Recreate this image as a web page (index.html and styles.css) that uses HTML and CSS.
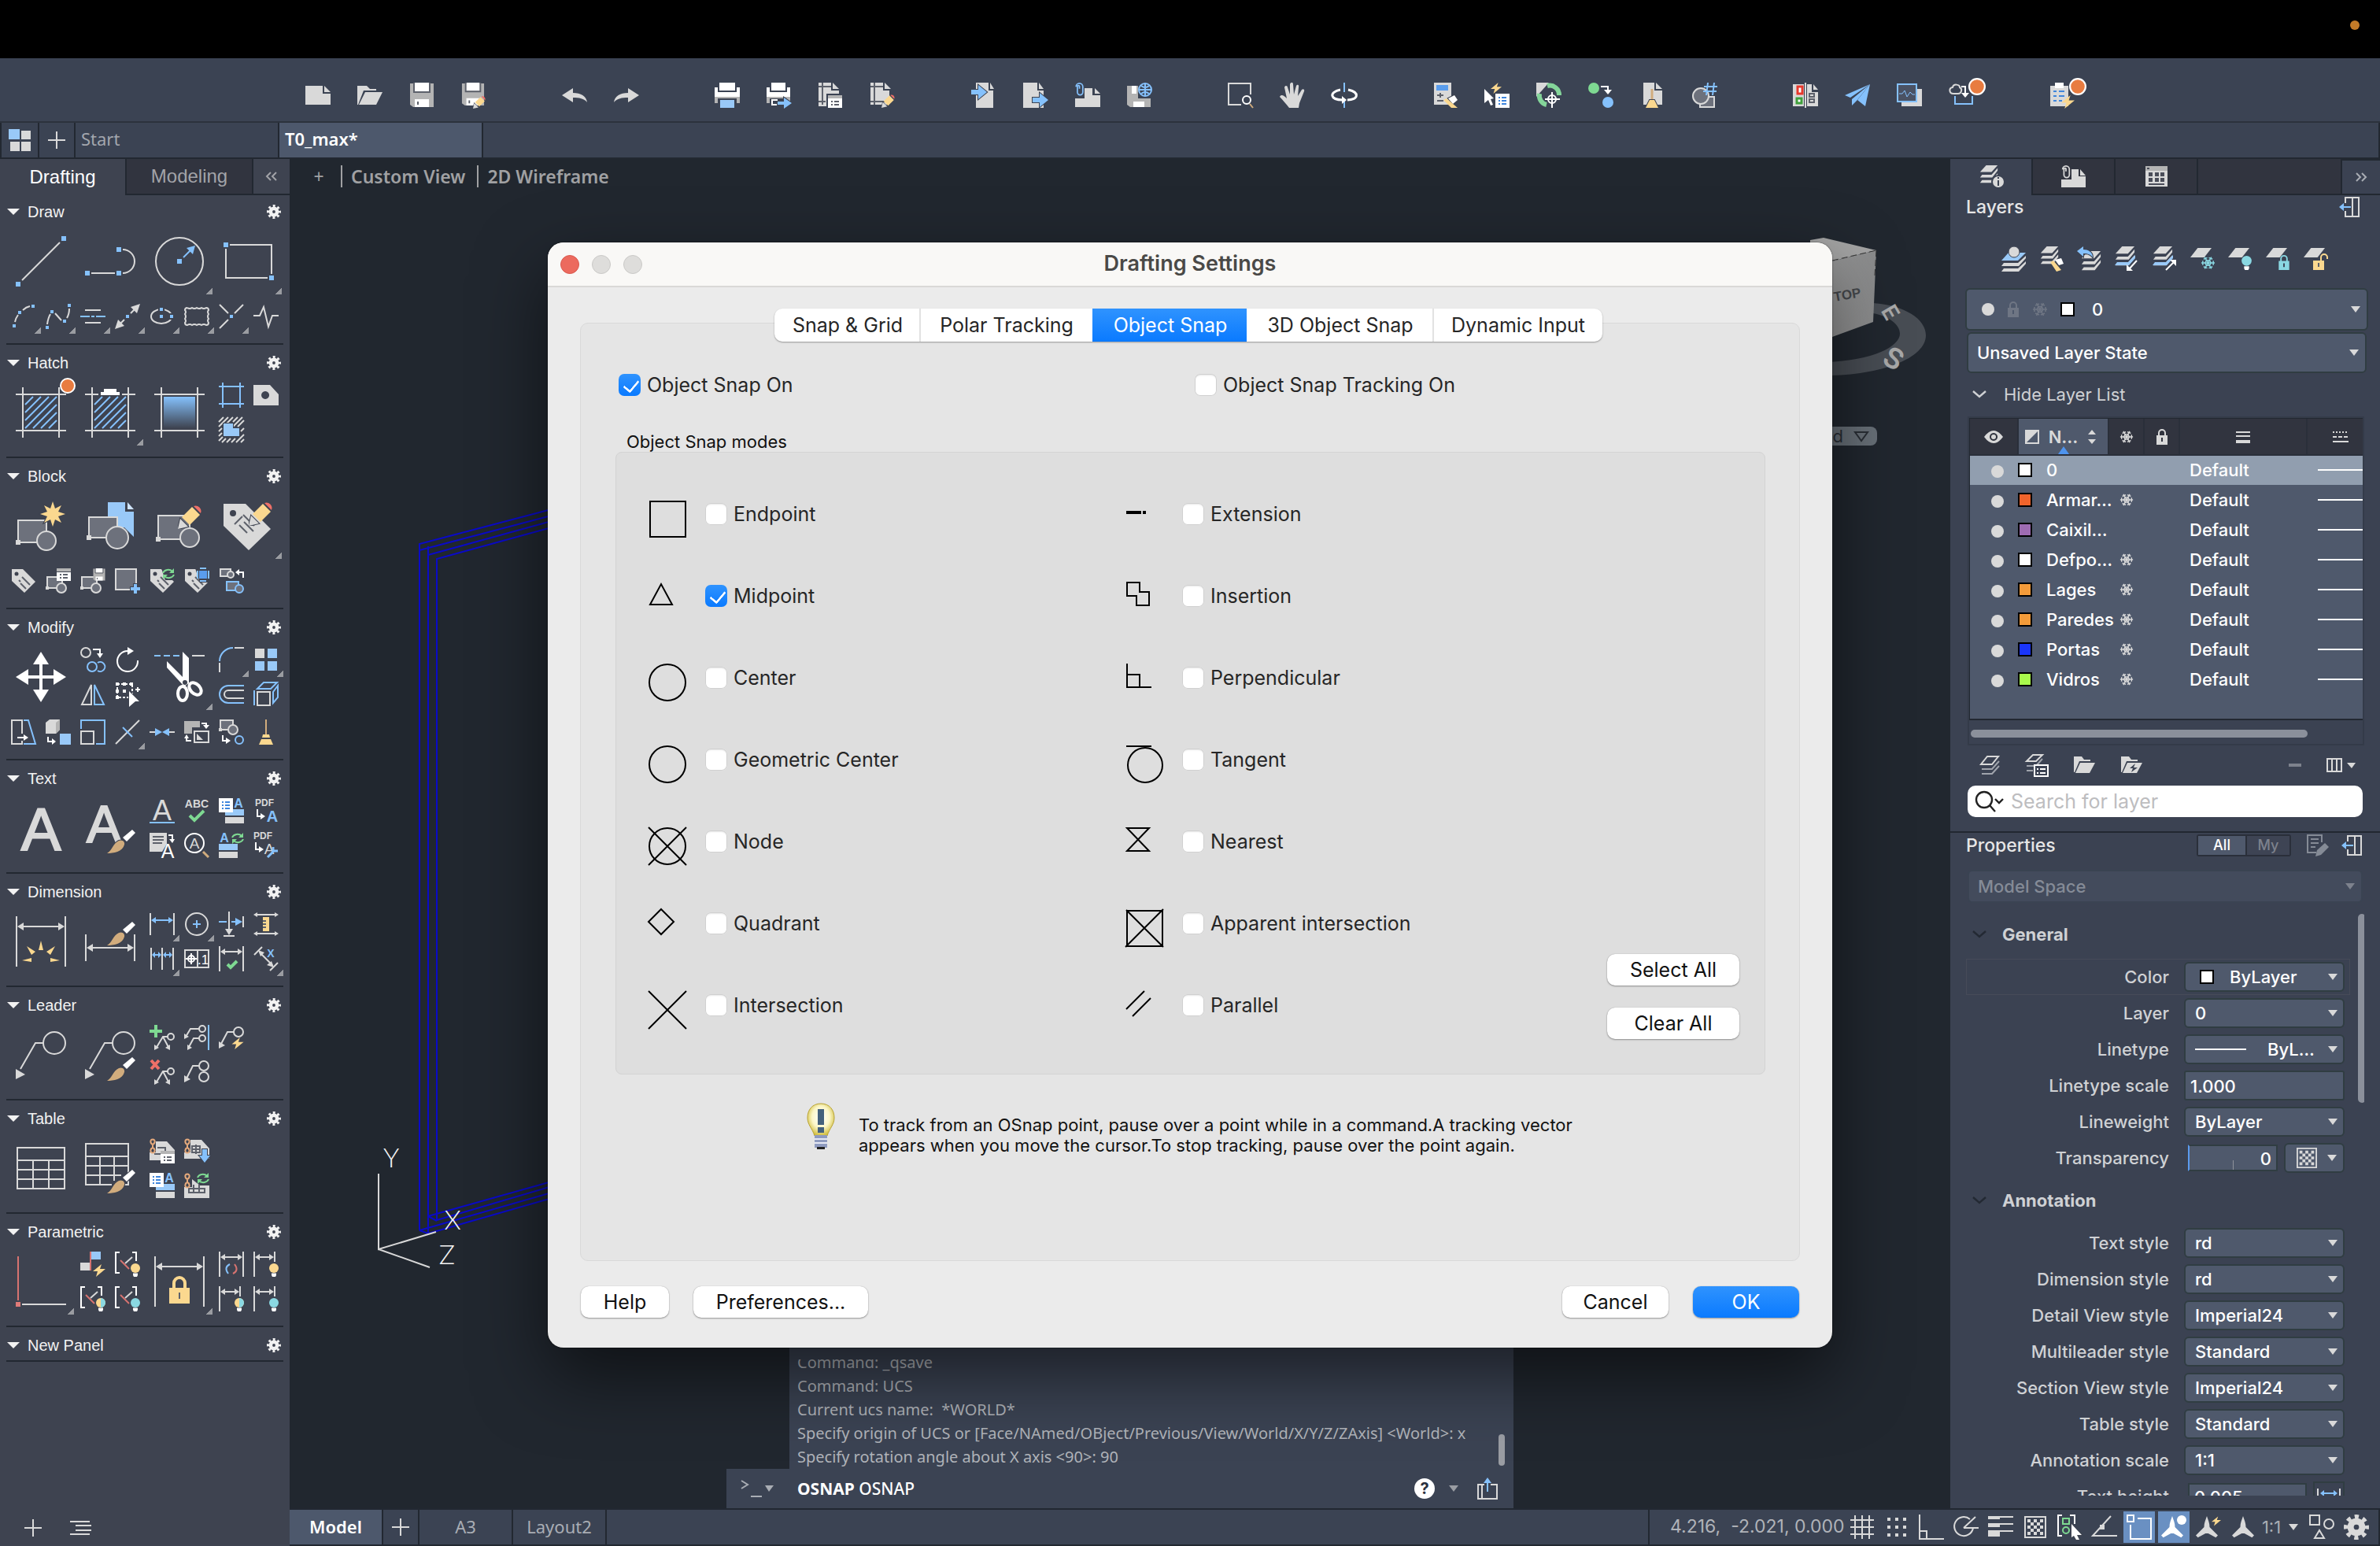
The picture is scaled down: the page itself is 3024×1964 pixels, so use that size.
FILE: index.html
```html
<!DOCTYPE html>
<html lang="en">
<head>
<meta charset="utf-8">
<meta name="viewport" content="width=device-width, initial-scale=1">
<title>T0_max* – Drafting Settings</title>
<link rel="stylesheet" href="styles.css">
</head>
<body>

<!-- Shared icon parts -->
<svg class="sprite" aria-hidden="true">
  <defs>
    <linearGradient id="fade" x1="0" y1="0" x2="0" y2="1"><stop offset="0" stop-color="#85c1fc"/><stop offset="1" stop-color="#3e4350"/></linearGradient>
    <linearGradient id="face" x1="0" y1="0" x2="1" y2="0"><stop offset="0" stop-color="#9c9c9c"/><stop offset="1" stop-color="#8a8b8c"/></linearGradient>
    <radialGradient id="glow" cx="50%" cy="42%" r="60%"><stop offset="0" stop-color="#ffffff"/><stop offset="0.55" stop-color="#fbf6c8"/><stop offset="1" stop-color="#cdb832"/></radialGradient>
  </defs>
  <symbol id="gear" viewBox="0 0 20 20"><circle cx="10" cy="10" r="8" fill="none" stroke="currentColor" stroke-width="4" stroke-dasharray="3.14" stroke-dashoffset="1.57"/><circle cx="10" cy="10" r="4.6" fill="none" stroke="currentColor" stroke-width="5"/></symbol>
  <symbol id="tri" viewBox="0 0 16 8" preserveAspectRatio="none"><path d="M0 0H16L8 8Z" fill="currentColor"/></symbol>
  <symbol id="chev" viewBox="0 0 18 10"><path d="M1 1L9 8L17 1" fill="none" stroke="currentColor" stroke-width="2.4"/></symbol>
  <symbol id="snow" viewBox="0 0 20 20"><g fill="none" stroke="currentColor" stroke-width="1.6"><path d="M1 10H19M5.500 2.200L14.500 17.800M14.500 2.200L5.500 17.800"/><path d="M14 10L12 6.500H8L6 10L8 13.500H12ZM3 7V13M17 7V13M4 5L9 3M16 5L11 3M4 15L9 17M16 15L11 17"/></g></symbol>
  <symbol id="lock" viewBox="0 0 16 22"><path d="M4 10V6a4 4 0 0 1 8 0V10" fill="none" stroke="currentColor" stroke-width="2"/><path fill="currentColor" fill-rule="evenodd" d="M1 9H15V21H1ZM7 12V17H9V12Z"/></symbol>
  <symbol id="pencil" viewBox="0 0 32 32"><path class="f k" d="M0 32L3 19L13 29Z"/><path class="fy" d="M5 17L18 4L28 14L15 27Z"/><path class="fr" d="M20 3a7 7 0 0 1 9 9Z"/></symbol>
  <symbol id="brush" viewBox="0 0 36 30"><path class="ft" d="M0 30C6 27 8 17 15 14C20 12 23 16 22 19C20 28 8 30 0 30Z"/><path class="fw" d="M20 10L32 0L36 4L25 15Z"/></symbol>
  <symbol id="bolt" viewBox="0 0 16 16"><path class="fy" d="M11 0L0 9H6L4 16L16 6H9Z"/></symbol>
  <symbol id="bulb" viewBox="0 0 12 17"><circle cx="6" cy="6" r="6" fill="currentColor"/><path class="fw" d="M3 12.500H9V15L8 17H4L3 15Z"/></symbol>
  <symbol id="sync" viewBox="0 0 16 14"><g fill="none" stroke="currentColor" stroke-width="2"><path d="M1 6A7 6 0 0 1 13 4"/><path d="M15 8A7 6 0 0 1 3 10"/></g><path fill="currentColor" d="M15 0V6H9ZM1 14V8H7Z"/></symbol>
  <symbol id="tag" viewBox="0 0 32 32"><path class="f" d="M1 1H15L31 17L17 31L1 16Z"/><circle class="fd" cx="7" cy="7" r="2.500"/><path class="ld" d="M10 15L12 17M14 11L24 21M12 19L19 26"/></symbol>
  <symbol id="block" viewBox="0 0 32 32"><path class="l fs" d="M2 11H21V25H2Z"/><circle class="l fs" cx="20" cy="25" r="6"/><path class="f" d="M0 23H4V27H0Z"/></symbol>
  <symbol id="form" viewBox="0 0 18 16"><path class="fw" d="M0 0H18V16H0Z"/><path class="fm" d="M0 0H18V4H0Z"/><path class="ld" d="M4 8H6M8 8H14M4 12H6M8 12H14"/></symbol>
  <symbol id="list" viewBox="0 0 18 18"><path class="fw" d="M0 0H18V18H0Z"/><path d="M4 5H6M8 5H14M4 9H6M8 9H14M4 13H6M8 13H14" fill="none" stroke="#3f86dd" stroke-width="2"/></symbol>
  <symbol id="disk" viewBox="0 0 32 32"><path class="fm" d="M1 1H31V31H5L1 28Z"/><path class="fw" d="M7 0H25V11H7ZM7 21H25V31H7Z"/><path class="ld" d="M11 24V28M6 0V12H26V0"/></symbol>
  <symbol id="link" viewBox="0 0 8 20"><path d="M4 1.500C0 1.500 1 7 4 8V12M4 18.500C8 18.500 7 13 4 12V8M4 1.500C8 1.500 7 7 4 8M4 18.500C0 18.500 1 13 4 12" fill="none" stroke="#e6aa7c" stroke-width="2"/></symbol>
  <symbol id="sheet" viewBox="0 0 26 10" preserveAspectRatio="none"><path d="M9 0H26L17 10H0Z" fill="currentColor"/></symbol>
  <symbol id="stack" viewBox="0 0 26 28"><path class="f" d="M9 0H26L17 10H0Z"/><path class="f" d="M3 14H17L26 4V8L18 18H0ZM3 22H17L26 12V16L18 26H0Z"/></symbol>
  <symbol id="dock" viewBox="0 0 26 26"><path class="l" d="M8 8V1H25V25H8V18M17 1V25"/><path class="lb" d="M5 13H15"/><path class="fb" d="M0 13L6 8V18Z"/></symbol>
  <symbol id="page" viewBox="0 0 32 32"><path class="f" d="M6 0H22V10H28V32H6Z"/><path class="f" d="M24 0L29 8H24Z"/></symbol>
  <symbol id="clip" viewBox="0 0 12 22"><path d="M6 9V5a2 2 0 0 0-3 0V14a4 4 0 0 0 8 0V6a5 5 0 0 0-10 0" fill="none" stroke="currentColor" stroke-width="2"/></symbol>
  <symbol id="ann" viewBox="0 0 32 32"><path fill="currentColor" d="M16 0C18 6 20 10 20 16L32 28L29 31L18 25H14L3 31L0 28L12 16C12 10 14 6 16 0Z"/></symbol>
  <symbol id="badge" viewBox="0 0 20 20"><circle cx="10" cy="10" r="9" fill="#e87c40" stroke="#fff" stroke-width="2"/></symbol>
  <symbol id="checker" viewBox="0 0 28 28"><path d="M1 1H27V27H1Z" fill="none" stroke="currentColor" stroke-width="2"/><path fill="currentColor" d="M4 4h4v4h-4zM12 4h4v4h-4zM20 4h4v4h-4zM8 8h4v4h-4zM16 8h4v4h-4zM4 12h4v4h-4zM12 12h4v4h-4zM20 12h4v4h-4zM8 16h4v4h-4zM16 16h4v4h-4zM4 20h4v4h-4zM12 20h4v4h-4zM20 20h4v4h-4z"/></symbol>
</svg>

<div class="menubar"><span class="mic-dot"></span></div>

<header class="toolbar">
  <div class="group">
    <button aria-label="New"><svg viewBox="0 0 32 32"><path class="f" d="M0 4H22V14H32V28H0Z"/><path class="f" d="M24 4L32 12H24Z"/></svg></button>
    <button aria-label="Open"><svg viewBox="0 0 32 32"><path class="f" d="M0 4H12L16 8H24V10H8L1 28H0Z"/><path class="f" d="M10 12H32L24 28H2Z"/></svg></button>
    <button aria-label="Save"><svg viewBox="0 0 32 32"><use href="#disk"/></svg></button>
    <button aria-label="Save As"><svg viewBox="0 0 32 32"><use href="#disk" width="30" height="30"/><use href="#pencil" x="15" y="16" width="17" height="17"/></svg></button>
  </div>
  <div class="group">
    <button aria-label="Undo"><svg viewBox="0 0 32 32"><path class="f" d="M0 16L14 7V13C24 13 31 17 32 25C28 20 22 19 14 19V25Z"/></svg></button>
    <button aria-label="Redo"><svg viewBox="0 0 32 32"><path class="f" d="M32 16L18 7V13C8 13 1 17 0 25C4 20 10 19 18 19V25Z"/></svg></button>
  </div>
  <div class="group">
    <button aria-label="Print"><svg viewBox="0 0 32 32"><path class="fw" d="M6 0H26V10H6ZM0 6H4V12H28V6H32V18H0Z"/><path class="fm" d="M0 18H32V26H28V20H4V26H0Z"/><path class="fbl" d="M7 22H25V32H7Z"/></svg></button>
    <button aria-label="Publish"><svg viewBox="0 0 32 32"><path class="fw" d="M6 0H24V10H6ZM0 6H4V12H26V6H30V18H0Z"/><path class="fm" d="M0 18H30V24H26V20H4V26H0Z"/><path class="lw" d="M14 22H7V28H14"/><path class="fb k" d="M14 24H22V19L32 26L22 33V28H14Z"/></svg></button>
    <button aria-label="Page Setup"><svg viewBox="0 0 32 32"><path class="f" d="M0 0H16V10H26V14H10V30H0Z"/><path class="f" d="M18 0L26 8H18Z"/><path class="ld" d="M0 5H16M5 0V28M0 24H9"/><use href="#form" x="12" y="16" width="18" height="16"/></svg></button>
    <button aria-label="Edit Page"><svg viewBox="0 0 32 32"><path class="f" d="M0 0H16V10H24V28H0Z"/><path class="f" d="M18 0L26 8H18Z"/><path class="ld" d="M0 5H16M5 0V28M0 24H20"/><use href="#pencil" x="14" y="14" width="18" height="18"/></svg></button>
  </div>
  <div class="group">
    <button aria-label="Import"><svg viewBox="0 0 32 32"><use href="#page"/><path class="fb k" d="M0 9H9V3L20 12L9 21V15H0Z"/></svg></button>
    <button aria-label="Export"><svg viewBox="0 0 32 32"><path class="f" d="M0 0H18V10H26V32H0Z"/><path class="f" d="M20 0L26 8H20Z"/><path class="fb k" d="M12 19H21V13L32 22L21 31V25H12Z"/></svg></button>
    <button aria-label="Attach"><svg viewBox="0 0 32 32"><path class="f" d="M0 20H12V7H22V16H32V31H0Z"/><path class="f" d="M25 7L32 14H25Z"/><use href="#clip" class="c-blue" width="11" height="19"/></svg></button>
    <button aria-label="Save to Web"><svg viewBox="0 0 32 32"><path class="fm" d="M0 4H14V20H30V31H4L0 28Z"/><path class="fw" d="M6 4H12V14H6ZM8 24H22V31H8Z"/><circle class="lb" cx="23" cy="9" r="8"/><path class="lb" d="M15 9H31M23 1V17M18 4Q23 8 28 4M18 14Q23 10 28 14"/></svg></button>
  </div>
  <div class="group">
    <button aria-label="Zoom Window"><svg viewBox="0 0 32 32"><path class="l" d="M17 28H1V1H29V15"/><circle class="lw" cx="24" cy="22" r="5"/><path class="ltan" d="M28 27L32 32"/></svg></button>
    <button aria-label="Pan"><svg viewBox="0 0 32 32"><path class="f" d="M12 32C8 27 4 22 0 18C2 14 6 17 9 20L6 6C7 3 10 4 10 6L13 15L13 2C14-1 17-1 17 2L18 15L21 4C22 2 25 2 24 6L23 17L28 9C30 7 32 9 31 11L25 26L24 32Z"/></svg></button>
    <button aria-label="Orbit"><svg viewBox="0 0 32 32"><path class="lb" d="M16 0V12M16 24V32"/><path class="lw thick" d="M11 9C-4 12-2 22 14 22M21 9C36 12 34 22 20 22"/><path class="fw" d="M13 17L19 22L13 27Z"/></svg></button>
  </div>
  <div class="group">
    <button aria-label="Quick Calc"><svg viewBox="0 0 32 32"><path class="f" d="M2 0H24V28H2Z"/><path d="M5 3H20V10H5Z" fill="#5a9ded"/><path class="ld" d="M6 16H14M10 13V19M6 23H14"/><path class="fw k" d="M20 20L28 16L32 22L26 27Z"/><path class="fy" d="M14 22L18 20L32 32H24Z"/></svg></button>
    <button aria-label="Quick Select"><svg viewBox="0 0 32 32"><path class="fw" d="M0 8L12 20L8 21L11 28L8 29L5 22L0 26Z"/><use href="#bolt" x="8" y="0" width="14" height="14"/><use href="#list" x="14" y="14" width="18" height="18"/></svg></button>
    <button aria-label="Geographic Location"><svg viewBox="0 0 32 32"><path class="f" d="M0 0H16L0 18Z"/><path d="M14 4a12 12 0 0 1 15 12M4 14a12 12 0 0 0 9 14" fill="none" stroke="#84d59a" stroke-width="6"/><circle class="lw" cx="20" cy="21" r="5"/><path class="lw" d="M20 12V32M11 21H30"/></svg></button>
    <button aria-label="Convert"><svg viewBox="0 0 32 32"><circle class="fg" cx="7" cy="7" r="7"/><path class="lw" d="M16 5H25V10"/><path class="fw" d="M20 9H30L25 15Z"/><circle class="fb" cx="25" cy="25" r="7"/></svg></button>
    <button aria-label="Purge"><svg viewBox="0 0 32 32"><path class="f" d="M4 0H18V10H28V28H4Z"/><path class="f" d="M20 0L28 8H20Z"/><path class="ltan thick k-line" d="M15 8V22"/><path class="fy k" d="M7 32L12 22H18L23 32Z"/></svg></button>
    <button aria-label="Count"><svg viewBox="0 0 32 32"><path class="l fs" d="M10 18H28V31H10Z"/><circle class="l fs" cx="11" cy="17" r="10"/><path class="lb" d="M20 0L18 16M28 0L26 16M15 5H32M14 11H31"/></svg></button>
  </div>
  <div class="group">
    <button aria-label="Compare"><svg viewBox="0 0 32 32"><path class="f" d="M0 2H14V30H0ZM18 2H24V12H32V30H18Z"/><path class="f" d="M26 2L32 9H26Z"/><path d="M6 5H12V14H6Z" fill="#fff" stroke="#e8382c" stroke-width="3"/><path d="M5 20H11V26H5Z" fill="#fff" stroke="#3fa03c" stroke-width="3"/><path class="ld" d="M21 14H27V18H21ZM21 21H27V25H21Z"/><path class="l" d="M16 0V32"/></svg></button>
    <button aria-label="Share"><svg viewBox="0 0 32 32"><path class="fb" d="M32 2L0 16L7 19Z"/><path class="fb" d="M32 2L9 21V29L15 23Z"/><path class="fb" d="M32 2L16 22L26 30Z"/></svg></button>
    <button aria-label="Activity"><svg viewBox="0 0 32 32"><path class="f" d="M6 8H32V30H6Z"/><path d="M1 2H25V24H1Z" fill="#4a5264" stroke="#85c1fc" stroke-width="2"/><path class="lb thin" d="M3 14H7L10 10L13 18L17 12L20 15H23"/></svg></button>
    <button aria-label="Cloud"><svg viewBox="0 0 32 32"><path class="lb" d="M8 17V27H30V17"/><path class="l" d="M6 14C0 14 0 6 5 6C6 1 14 2 14 6C18 8 16 14 12 14Z"/><path class="lw" d="M16 5H21V14"/><path class="fw" d="M16 13H26L21 19Z"/><use href="#badge" x="25" y="-6" width="22" height="22"/></svg></button>
  </div>
  <div class="group">
    <button aria-label="Checklist"><svg viewBox="0 0 32 32"><path class="f" d="M1 4H24V30H1Z"/><path class="fw" d="M7 0H18V7H7Z"/><path d="M5 11H9M12 11H19M5 17H9M12 17H19M5 23H9M12 23H16" fill="none" stroke="#3f86dd" stroke-width="2"/><use href="#bolt" x="15" y="16" width="17" height="17"/><use href="#badge" x="25" y="-6" width="22" height="22"/></svg></button>
  </div>
</header>

<nav class="doctabs" aria-label="Documents">
  <button class="doc-icon" aria-label="Start tab layout"><svg width="28" height="28" viewBox="0 0 28 28"><path class="fbl" d="M0 0H14V13H0Z"/><path class="f" d="M16 2H28V13H16ZM2 16H14V28H2ZM16 16H28V28H16Z"/></svg></button>
  <button class="doc-add" aria-label="New drawing"><svg width="22" height="22" viewBox="0 0 22 22"><path class="l" d="M11 0V22M0 11H22"/></svg></button>
  <a class="doc" href="#start">Start</a>
  <a class="doc active" href="#t0">T0_max*</a>
  <span class="doc-rest"></span>
</nav>

<div class="workspace">

<aside class="toolset">
  <div class="toolset-tabs">
    <button class="active">Drafting</button><button>Modeling</button><button class="fold" aria-label="Collapse"><svg width="14" height="12" viewBox="0 0 14 12"><path d="M6 1L1 6L6 11M13 1L8 6L13 11" fill="none" stroke="#a2a3a8" stroke-width="2"/></svg></button>
  </div>

  <section>
    <h2><svg class="tri"><use href="#tri"/></svg>Draw<svg class="gear"><use href="#gear"/></svg></h2>
    <div class="tools">
      <button class="big" aria-label="Line"><svg viewBox="0 0 64 64"><path class="l" d="M8 56L56 8"/><path class="fb" d="M0 58H6V64H0ZM58 0H64V6H58Z"/></svg></button>
      <button class="big" aria-label="Polyline"><svg viewBox="0 0 64 64"><path class="l" d="M8 47H38M48 17a15 15 0 0 1 0 30"/><path class="fb" d="M0 44H6V50H0ZM40 44H46V50H40ZM40 14H46V20H40Z"/></svg></button>
      <button class="big fly" aria-label="Circle"><svg viewBox="0 0 64 64"><circle class="l" cx="32" cy="32" r="30"/><path class="lb" d="M37 27L47 17"/><path class="fb" d="M52 12L41 15L49 23ZM29 29H35V35H29Z"/></svg></button>
      <button class="big fly" aria-label="Rectangle"><svg viewBox="0 0 64 64"><path class="l" d="M8 11H61V48M56 53H3V16"/><path class="fb" d="M0 8H6V14H0ZM58 50H64V56H58Z"/></svg></button>
    </div>
    <div class="tools single">
      <button class="fly" aria-label="Arc"><svg viewBox="0 0 32 32"><path class="l" d="M5 23Q6 18 9 14M15 8Q19 4 24 3"/><path class="fb" d="M2 26H6V30H2ZM9 9H13V13H9ZM26 1H30V5H26Z"/></svg></button>
      <button class="fly" aria-label="Spline"><svg viewBox="0 0 32 32"><path class="l" d="M2 26Q3 18 6 13M12 12L20 21M27 18Q30 13 30 6"/><path class="fb" d="M0 28H4V32H0ZM6 8H10V12H6ZM22 20H26V24H22ZM28 0H32V4H28Z"/></svg></button>
      <button class="fly" aria-label="Multiline"><svg viewBox="0 0 32 32"><path class="l" d="M6 8H26M6 24H26"/><path class="lb" d="M0 16H12M14 16H18M20 16H32"/></svg></button>
      <button class="fly" aria-label="Ray"><svg viewBox="0 0 32 32"><path class="l" d="M5 27L12 20M20 12L27 5"/><path class="f" d="M32 0L20 4L28 12ZM0 32L4 20L12 28Z"/><path class="fb" d="M14 14H18V18H14Z"/></svg></button>
      <button class="fly" aria-label="Ellipse"><svg viewBox="0 0 32 32"><ellipse class="l" cx="15" cy="16" rx="13" ry="9"/><path class="fd" d="M11 3H19V11H11ZM24 12H32V20H24Z"/><path class="fb" d="M13 5H17V9H13ZM26 14H30V18H26ZM13 14H17V18H13Z"/></svg></button>
      <button class="fly" aria-label="Revision Cloud"><svg viewBox="0 0 32 32"><path class="l" d="M4 5q3 2 6 0q3 2 6 0q3 2 6 0q3 2 6 0q3 0 3 3q-2 2 0 5q-2 3 0 6q-2 2 0 5q0 3-3 3q-3-2-6 0q-3-2-6 0q-3-2-6 0q-3-2-6 0q-3 0-3-3q2-2 0-5q2-3 0-6q2-3 0-5q0-3 3-3"/></svg></button>
      <button class="fly" aria-label="Trim"><svg viewBox="0 0 32 32"><path class="l" d="M1 1L12 12M20 12L31 1M12 20L1 31"/><path class="fb" d="M14 14H18V18H14Z"/></svg></button>
      <button aria-label="Break line"><svg viewBox="0 0 32 32"><path class="l" d="M0 15H8L13 4L19 29L24 15H32"/></svg></button>
    </div>
  </section>

  <section>
    <h2><svg class="tri"><use href="#tri"/></svg>Hatch<svg class="gear"><use href="#gear"/></svg></h2>
    <div class="tools">
      <button class="big" aria-label="Hatch"><svg viewBox="0 0 64 64"><path class="l" d="M0 9H64M0 55H64M9 0V64M55 0V64"/><path class="lb" d="M12 22L22 12M12 32L32 12M12 42L42 12M12 52L52 12M22 52L52 22M32 52L52 32M42 52L52 42"/><use href="#badge" x="56" y="-12" width="20" height="20"/></svg></button>
      <button class="big fly" aria-label="Hatch Edit"><svg viewBox="0 0 64 64"><path class="l" d="M0 9H17M47 9H64M0 55H64M9 0V64M55 0V64"/><path class="lb" d="M12 22L22 12M12 32L32 12M12 42L42 12M12 52L52 12M22 52L52 22M32 52L52 32M42 52L52 42"/><path class="fw" d="M24 2H40V6H44V10H20V6H24Z"/></svg></button>
      <button class="big" aria-label="Gradient"><svg viewBox="0 0 64 64"><path class="l" d="M0 9H64M0 55H64M9 0V64M55 0V64"/><path d="M12 12H52V52H12Z" fill="url(#fade)"/></svg></button>
      <button aria-label="Boundary"><svg viewBox="0 0 32 32"><path class="lb" d="M0 5H32M0 27H32M5 0V32M27 0V32"/></svg></button>
      <button aria-label="Region"><svg viewBox="0 0 32 32"><path class="l" d="M0 6L6 0M0 12L12 0M6 12L18 0M18 6L24 0M18 12L30 0M24 12L32 4M0 18L4 14M0 24L4 20M0 30L5 25M4 32L9 27M10 32L15 27M16 32L21 27M22 32L32 22M28 32L32 28M28 18L32 14"/><path class="fbl k" d="M6 8H18V14H26V24H6Z"/></svg></button>
      <button aria-label="Wipeout"><svg viewBox="0 0 32 32"><path class="f" fill-rule="evenodd" d="M0 3H21L32 15V29H0ZM15 11a5 5 0 1 0 0.100 0Z"/></svg></button>
    </div>
  </section>

  <section>
    <h2><svg class="tri"><use href="#tri"/></svg>Block<svg class="gear"><use href="#gear"/></svg></h2>
    <div class="tools">
      <button class="big" aria-label="Create Block"><svg viewBox="0 0 64 64"><path class="l fs" d="M3 25H39V53H3Z"/><circle class="l fs" cx="39" cy="51" r="12"/><path class="f" d="M0 50H6V56H0Z"/><path class="fy k" d="M63 17L54 14L58 6L50 10L47 1L44 10L36 6L40 14L31 17L40 20L36 28L44 24L47 33L50 24L58 28L54 20Z"/></svg></button>
      <button class="big" aria-label="Insert Block"><svg viewBox="0 0 64 64"><path class="fbl" d="M29 2H51V14H62V46L50 34H29Z"/><path d="M54 2L62 11H54Z" fill="#cfe4fb"/><path class="l fs" d="M5 21H41V47H5Z"/><circle class="l fs" cx="41" cy="47" r="14"/><path class="f" d="M2 44H8V50H2Z"/></svg></button>
      <button class="big" aria-label="Edit Block"><svg viewBox="0 0 64 64"><path class="l fs" d="M5 19H45V49H5Z"/><circle class="l fs" cx="45" cy="47" r="12"/><path class="f" d="M2 46H8V52H2Z"/><use href="#pencil" x="30" y="4" width="32" height="32"/></svg></button>
      <button class="big fly" aria-label="Edit Attributes"><svg viewBox="0 0 64 64"><path class="f" d="M0 4H28L60 36L32 63L0 32Z"/><circle class="fd" cx="12" cy="16" r="4"/><path class="ld" d="M25 18L39 32M14 30L24 20M20 31L30 41M26 27L38 39"/><use href="#pencil" x="32" y="0" width="32" height="32"/></svg></button>
    </div>
    <div class="tools single">
      <button aria-label="Attribute"><svg viewBox="0 0 32 32"><use href="#tag"/></svg></button>
      <button aria-label="Block Manager"><svg viewBox="0 0 32 32"><use href="#block"/><use class="k" href="#form" x="14" y="0" width="18" height="16"/></svg></button>
      <button aria-label="Write Block"><svg viewBox="0 0 32 32"><use href="#block"/><use href="#disk" x="16" y="0" width="16" height="16"/></svg></button>
      <button aria-label="Base Point"><svg viewBox="0 0 32 32"><path class="l fs" d="M1 1H27V27H1Z"/><path class="fb k" d="M24 20H28V24H32V28H28V32H24V28H20V24H24Z"/></svg></button>
      <button aria-label="Sync Attributes"><svg viewBox="0 0 32 32"><use href="#tag"/><path class="fd" d="M15 0H32V15H20Z"/><use class="c-green" href="#sync" x="16" y="0" width="16" height="14"/></svg></button>
      <button aria-label="Attribute Display"><svg viewBox="0 0 32 32"><use href="#tag"/><path class="fd" d="M14 0H32V18H20Z"/><path d="M19 3H29V13H19Z" fill="#5a9ded"/><path class="lb" d="M20 0H28M20 16H28M17 3V13M31 3V13"/></svg></button>
      <button aria-label="Replace Block"><svg viewBox="0 0 32 32"><path class="l fs" d="M2 1H15V10H2Z"/><circle class="l fs" cx="15" cy="8" r="4"/><path class="lb fs" d="M10 17H25V28H10Z"/><circle class="lb fs" cx="26" cy="26" r="5"/><path class="fw" d="M21 5L26 1V9Z"/><path class="lw" d="M25 5H31V12"/></svg></button>
    </div>
  </section>

  <section>
    <h2><svg class="tri"><use href="#tri"/></svg>Modify<svg class="gear"><use href="#gear"/></svg></h2>
    <div class="tools">
      <button class="big" aria-label="Move"><svg viewBox="0 0 64 64"><path class="fw" d="M32 0L42 16H34V30H48V22L64 32L48 42V34H34V48H42L32 64L22 48H30V34H16V42L0 32L16 22V30H30V16H22Z"/></svg></button>
      <button aria-label="Copy"><svg viewBox="0 0 32 32"><circle class="l" cx="7" cy="7" r="6"/><path class="lw" d="M16 3H25V9"/><path class="fw" d="M21 8H29L25 14Z"/><circle class="lb" cx="15" cy="25" r="6"/><path class="lb" d="M22 20a6 6 0 1 1 0 10"/></svg></button>
      <button aria-label="Mirror"><svg viewBox="0 0 32 32"><path class="l" d="M14 4V29H2Z"/><path class="lb" d="M18 4V29H30Z"/></svg></button>
      <button aria-label="Rotate"><svg viewBox="0 0 32 32"><path class="lw" d="M29 17A13 13 0 1 1 16 5"/><path class="fw" d="M16 0L24 5L16 10Z"/></svg></button>
      <button aria-label="Stretch selection"><svg viewBox="0 0 32 32"><path class="lw" stroke-dasharray="3 2" d="M3 3H22V20H3Z"/><path class="fw" d="M1 1H5V5H1ZM10 1H14V5H10ZM19 1H23V5H19ZM1 10H5V14H1ZM10 10H14V14H10ZM1 18H5V22H1Z"/><path class="fw k" d="M18 12L31 25H26L18 32Z"/><path class="lw" d="M29 7V13M26 10H32"/></svg></button>
      <button class="big fly" aria-label="Trim"><svg viewBox="0 0 64 64"><path class="lb" d="M0 5H8M12 5H20M24 5H32"/><path class="l" d="M48 5H64"/><path class="fw" d="M36 0L44 8V40H36Z"/><path class="fw" d="M16 12L44 40L38 44L16 20Z"/><ellipse class="lw thicker" cx="36" cy="53" rx="6" ry="9"/><ellipse class="lw thicker" cx="52" cy="47" rx="6" ry="9" transform="rotate(-45 52 47)"/><circle class="fd" cx="39" cy="39" r="3"/></svg></button>
      <button class="fly" aria-label="Fillet"><svg viewBox="0 0 32 32"><path class="lb" d="M1 18A17 17 0 0 1 18 1"/><path class="l" d="M20 1H32M1 20V32"/></svg></button>
      <button aria-label="Offset"><svg viewBox="0 0 32 32"><path class="lb" d="M32 5H12a11 11 0 0 0 0 22H32"/><path class="l" d="M32 11H12a5 5 0 0 0 0 10H32"/></svg></button>
      <button class="fly" aria-label="Array"><svg viewBox="0 0 32 32"><path class="f" d="M2 2H14V14H2Z"/><path class="fbl" d="M18 2H30V14H18ZM2 18H14V30H2ZM18 18H30V30H18Z"/></svg></button>
      <button aria-label="Extrude"><svg viewBox="0 0 32 32"><path class="l" d="M5 13H21V30H5Z"/><path class="lb" d="M5 9L13 1H30L22 9ZM25 13L31 5V20L25 27ZM1 11V30"/></svg></button>
    </div>
    <div class="tools single">
      <button aria-label="Stretch"><svg viewBox="0 0 32 32"><path class="l" d="M14 18V1H1V31H14V27"/><path class="lb" d="M16 1H22L31 31H16"/><path class="lw" d="M8 23H18"/><path class="fw" d="M16 19L22 23L16 27Z"/></svg></button>
      <button aria-label="Copy 3D"><svg viewBox="0 0 32 32"><path class="f" d="M0 4L5 0H18V13L13 18H0Z"/><path class="fm" d="M13 4L18 0V13L13 18Z"/><path class="fbl" d="M18 18H32V32H18Z"/><path class="lw" d="M3 22V28H9"/><path class="fw" d="M8 24L13 28L8 32Z"/></svg></button>
      <button aria-label="Scale"><svg viewBox="0 0 32 32"><path class="lb" d="M1 12V1H31V31H20"/><path class="l" d="M1 15H17V31H1Z"/></svg></button>
      <button class="fly" aria-label="Break"><svg viewBox="0 0 32 32"><path class="l" d="M1 31L31 1"/><path class="lb" d="M10 10L22 22"/></svg></button>
      <button aria-label="Join"><svg viewBox="0 0 32 32"><path class="l" d="M0 16H8M24 16H32"/><path class="fb" d="M7 11L16 16L7 21ZM25 11L16 16L25 21Z"/></svg></button>
      <button aria-label="Swap"><svg viewBox="0 0 32 32"><path class="fm" d="M0 2H20V10H10V18H0Z"/><path class="l" d="M13 15H31V29H13Z"/><path class="f" d="M16 18L24 26H16Z"/><path class="lw" d="M22 5H28V8M9 27H3V23"/><path class="fw" d="M24 7H32L28 12ZM0 24H6L3 19Z"/></svg></button>
      <button aria-label="Explode"><svg viewBox="0 0 32 32"><path class="l fs" d="M2 1H18V13H2Z"/><circle class="l fs" cx="18" cy="13" r="6"/><path class="f" d="M0 11H4V15H0Z"/><circle class="lb" cx="26" cy="26" r="5"/><path class="lw" d="M5 20V27H10"/><path class="fw" d="M9 23L15 27L9 31Z"/></svg></button>
      <button aria-label="Clean up"><svg viewBox="0 0 32 32"><path class="ltan" d="M16 0V20"/><path class="fy" d="M12 19H20L21 23H11ZM10 25H22L25 32H7Z"/></svg></button>
    </div>
  </section>

  <section>
    <h2><svg class="tri"><use href="#tri"/></svg>Text<svg class="gear"><use href="#gear"/></svg></h2>
    <div class="tools">
      <button class="big" aria-label="Multiline Text"><svg viewBox="0 0 64 64"><text class="glyph heavy" x="32" y="60" font-size="76">A</text></svg></button>
      <button class="big" aria-label="Text Style"><svg viewBox="0 0 64 64"><text class="glyph heavy" x="24" y="50" font-size="66">A</text><use class="k" href="#brush" x="28" y="34" width="36" height="30"/></svg></button>
      <button aria-label="Single Line"><svg viewBox="0 0 32 32"><text class="glyph" x="16" y="28" font-size="36">A</text><path class="lb" d="M0 31H32"/></svg></button>
      <button aria-label="Text Align"><svg viewBox="0 0 32 32"><path class="f" d="M0 0H22V14L16 24H0Z"/><path class="ld" d="M4 5H18M4 9H18M4 13H16"/><path class="lw" d="M24 3H29V9"/><path class="fw" d="M25 8H32L29 13Z"/><text class="glyph w" x="23" y="32" font-size="25">A</text></svg></button>
      <button aria-label="Spell Check"><svg viewBox="0 0 32 32"><text class="glyph b" x="16" y="12" font-size="14">ABC</text><path class="lg" d="M7 22L13 28L25 16"/></svg></button>
      <button aria-label="Find Text"><svg viewBox="0 0 32 32"><circle class="lw" cx="13" cy="13" r="12"/><text class="glyph" x="13" y="20" font-size="19">A</text><path class="ltan thick" d="M24 24L31 31"/></svg></button>
      <button aria-label="Columns"><svg viewBox="0 0 32 32"><path class="fbl" d="M8 14H32V22H8Z"/><path class="f" d="M8 24H32V32H8Z"/><use href="#list" width="18" height="18"/><text class="glyph bl" x="25" y="12" font-size="16">A</text></svg></button>
      <button aria-label="Update Fields"><svg viewBox="0 0 32 32"><path class="fbl" d="M0 14H24V22H0Z"/><path class="f" d="M0 24H24V32H0Z"/><text class="glyph bl" x="7" y="12" font-size="16">A</text><use class="c-green" href="#sync" x="16" y="0" width="16" height="14"/></svg></button>
      <button aria-label="PDF Text"><svg viewBox="0 0 32 32"><text class="glyph b" x="14" y="10" font-size="12">PDF</text><path class="lw" d="M5 14V23H10"/><path class="fw" d="M9 19L15 23L9 27Z"/><text class="glyph bl" x="24" y="30" font-size="20">A</text></svg></button>
      <button aria-label="PDF Settings"><svg viewBox="0 0 32 32"><text class="glyph b" x="12" y="8" font-size="12">PDF</text><path class="lw" d="M3 12V21H8"/><path class="fw" d="M7 17L13 21L7 25Z"/><text class="glyph" x="20" y="27" font-size="19">A</text><path class="lb thick" d="M18 31L27 22M25 18V23H31"/></svg></button>
    </div>
  </section>

  <section>
    <h2><svg class="tri"><use href="#tri"/></svg>Dimension<svg class="gear"><use href="#gear"/></svg></h2>
    <div class="tools">
      <button class="big" aria-label="Dimension"><svg viewBox="0 0 64 64"><path class="l" d="M1 0V64M63 0V64M6 13H58"/><path class="f" d="M2 13L10 8V18ZM62 13L54 8V18Z"/><path class="fy" d="M29 43L32 31L35 43ZM20 49L14 38L25 45ZM44 49L50 38L39 45ZM20 53V58L8 56ZM44 53V58L56 56Z"/></svg></button>
      <button class="big" aria-label="Dimension Style"><svg viewBox="0 0 64 64"><path class="l" d="M1 23V57M63 23V57M6 40H58"/><path class="f" d="M2 40L10 35V45ZM62 40L54 35V45Z"/><use class="k" href="#brush" x="28" y="7" width="36" height="30"/></svg></button>
      <button class="fly" aria-label="Linear"><svg viewBox="0 0 32 32"><path class="l" d="M1 2V30M31 2V30"/><path class="lb" d="M4 11H28"/><path class="fb" d="M2 11L8 7V15ZM30 11L24 7V15Z"/></svg></button>
      <button class="fly" aria-label="Continue"><svg viewBox="0 0 32 32"><path class="l" d="M2 2V30M16 2V30M30 2V30"/><path class="lb" d="M5 11H13M19 11H27"/><path class="fb" d="M3 11L7 7V15ZM15 11L11 7V15ZM17 11L21 7V15ZM29 11L25 7V15Z"/></svg></button>
      <button class="fly" aria-label="Center Mark"><svg viewBox="0 0 32 32"><circle class="l" cx="16" cy="16" r="14"/><path class="lb" d="M16 11V21M11 16H21"/></svg></button>
      <button aria-label="Tolerance"><svg viewBox="0 0 32 32"><path class="l" d="M1 5H31V27H1ZM17 5V27"/><circle class="lw" cx="9" cy="16" r="4"/><path class="lw" d="M9 9V23M2 16H16"/><text class="glyph w" x="24" y="23" font-size="17">.1</text></svg></button>
      <button aria-label="Break Dimension"><svg viewBox="0 0 32 32"><path class="l" d="M13 0V24M6 31H20M31 6V20"/><path class="f" d="M8 22H18L13 30Z"/><path class="lb" d="M0 13H10M16 13H22"/><path class="fb" d="M21 8L30 13L21 18Z"/></svg></button>
      <button aria-label="Inspect"><svg viewBox="0 0 32 32"><path class="l" d="M1 0V32M31 0V32M5 7H27"/><path class="f" d="M2 7L8 3V11ZM30 7L24 3V11Z"/><path class="lg" d="M11 23L15 27L23 19"/></svg></button>
      <button aria-label="Measure"><svg viewBox="0 0 32 32"><path class="l" d="M3 4H29M3 28H29"/><path class="f" d="M0 4L5 1V7ZM32 4L27 1V7ZM0 28L5 25V31ZM32 28L27 25V31Z"/><path class="fy" d="M12 7H20V25H12Z"/><path class="ld" d="M12 12H16M12 16H16M12 20H16"/></svg></button>
      <button class="fly" aria-label="Oblique"><svg viewBox="0 0 32 32"><path class="l" d="M1 11L11 1M21 31L31 21M8 8L24 24"/><path class="f" d="M6 5L14 8L9 13ZM26 27L17 24L23 19Z"/><text class="glyph bl" x="22" y="14" font-size="14">X</text></svg></button>
    </div>
  </section>

  <section>
    <h2><svg class="tri"><use href="#tri"/></svg>Leader<svg class="gear"><use href="#gear"/></svg></h2>
    <div class="tools">
      <button class="big" aria-label="Multileader"><svg viewBox="0 0 64 64"><circle class="l" cx="49" cy="17" r="14"/><path class="l" d="M35 17H25L6 50"/><path class="f" d="M0 63V50L12 57Z"/></svg></button>
      <button class="big" aria-label="Leader Style"><svg viewBox="0 0 64 64"><circle class="l" cx="49" cy="17" r="14"/><path class="l" d="M35 17H25L6 50"/><path class="f" d="M0 63V50L12 57Z"/><use class="k" href="#brush" x="28" y="35" width="36" height="30"/></svg></button>
      <button aria-label="Add Leader"><svg viewBox="0 0 32 32"><path class="fg" d="M6 0H10V6H16V10H10V16H6V10H0V6H6Z"/><circle class="l" cx="27" cy="15" r="4"/><path class="l" d="M23 15H17L8 30M17 15L25 30"/><path class="f" d="M6 32V25L12 29ZM26 32V25L20 29Z"/></svg></button>
      <button aria-label="Remove Leader"><svg viewBox="0 0 32 32"><path d="M2 1L12 12M12 1L2 12" fill="none" stroke="#ef7068" stroke-width="4"/><circle class="l" cx="27" cy="15" r="4"/><path class="l" d="M23 15H17L8 30M17 15L25 30"/><path class="f" d="M6 32V25L12 29ZM26 32V25L20 29Z"/></svg></button>
      <button aria-label="Align Leaders"><svg viewBox="0 0 32 32"><circle class="l" cx="23" cy="5" r="4"/><circle class="l" cx="23" cy="17" r="4"/><path class="l" d="M19 5H8L2 15M19 17H12L6 28"/><path class="f" d="M0 18V11L6 15ZM4 32V25L10 29Z"/><path class="lb" d="M31 0V32"/></svg></button>
      <button aria-label="Collect Leaders"><svg viewBox="0 0 32 32"><circle class="l" cx="25" cy="8" r="6"/><circle class="l" cx="25" cy="22" r="6"/><path class="l" d="M19 8H11L3 24"/><path class="f" d="M0 29V20L8 25Z"/></svg></button>
      <button aria-label="Quick Leader"><svg viewBox="0 0 32 32"><circle class="l" cx="25" cy="9" r="6"/><path class="l" d="M19 9H11L3 24"/><path class="f" d="M0 30V21L8 26Z"/><use href="#bolt" x="16" y="16" width="16" height="15"/></svg></button>
    </div>
  </section>

  <section>
    <h2><svg class="tri"><use href="#tri"/></svg>Table<svg class="gear"><use href="#gear"/></svg></h2>
    <div class="tools">
      <button class="big" aria-label="Table"><svg viewBox="0 0 64 64"><path class="l" d="M2 6H62V58H2ZM2 22H62M2 34H62M2 46H62M22 22V58M42 22V58"/></svg></button>
      <button class="big" aria-label="Table Style"><svg viewBox="0 0 64 64"><path class="l" d="M55 44V1H1V53H34M1 17H55M1 29H55M1 41H46M19 17V53M37 17V48M50 53H55V48"/><use class="k" href="#brush" x="28" y="34" width="36" height="30"/></svg></button>
      <button aria-label="Data Link"><svg viewBox="0 0 32 32"><path class="f" d="M0 18H8V4H22L32 15V28H0Z"/><path class="ld" d="M10 12H20V20H6"/><use href="#link" width="8" height="20"/><use href="#form" x="14" y="16" width="18" height="16"/></svg></button>
      <button aria-label="Field List"><svg viewBox="0 0 32 32"><path class="fbl" d="M8 14H32V22H8Z"/><path class="f" d="M8 24H32V32H8Z"/><use href="#list" width="18" height="18"/><text class="glyph bl" x="25" y="12" font-size="16">A</text></svg></button>
      <button aria-label="Download Link"><svg viewBox="0 0 32 32"><path class="f" d="M0 18H8V2H22L32 13V26H0Z"/><path class="ld" d="M10 10H20V18H10ZM10 14H20M15 8V20"/><use href="#link" width="8" height="20"/><path class="fb k" d="M23 14H29V22H33L26 31L19 22H23Z"/></svg></button>
      <button aria-label="Update Link"><svg viewBox="0 0 32 32"><path class="f" d="M0 18H10V8L20 16H32V32H0Z"/><path class="ld" d="M6 20H26V25H6ZM12 15V25M19 15V25"/><use href="#link" width="8" height="20"/><use class="c-green" href="#sync" x="16" y="0" width="16" height="14"/></svg></button>
    </div>
  </section>

  <section>
    <h2><svg class="tri"><use href="#tri"/></svg>Parametric<svg class="gear"><use href="#gear"/></svg></h2>
    <div class="tools">
      <button class="big fly" aria-label="Coincident"><svg viewBox="0 0 64 64"><path class="lr" d="M3 0V56"/><path d="M0 58H6V64H0Z" fill="#e07b78"/><path class="l" d="M8 61H64"/></svg></button>
      <button aria-label="Auto Constrain"><svg viewBox="0 0 32 32"><path class="f" d="M0 14H12V24H0Z"/><path class="fbl" d="M14 0H26V10H14Z"/><path class="lr" d="M13 0V24"/><use href="#bolt" x="16" y="16" width="16" height="16"/></svg></button>
      <button aria-label="Show or Hide"><svg viewBox="0 0 32 32"><path class="lw" d="M6 1H1V27H6M22 1H27V12"/><path class="lr" d="M7 11L18 22"/><path class="l" d="M13 15L22 7"/><use class="c-gold" href="#bulb" x="20" y="15" width="12" height="17"/><path class="fc" d="M26 15a6 6 0 0 1 0 12Z"/></svg></button>
      <button aria-label="Show Constraints"><svg viewBox="0 0 32 32"><path class="lw" d="M6 1H1V27H6M22 1H27V12"/><path class="lr" d="M7 11L18 22"/><path class="l" d="M13 15L22 7"/><use class="c-gold" href="#bulb" x="20" y="15" width="12" height="17"/></svg></button>
      <button aria-label="Hide Constraints"><svg viewBox="0 0 32 32"><path class="lw" d="M6 1H1V27H6M22 1H27V12"/><path class="lr" d="M7 11L18 22"/><path class="l" d="M13 15L22 7"/><use class="c-cyan" href="#bulb" x="20" y="15" width="12" height="17"/></svg></button>
      <button class="big fly" aria-label="Linear Constraint"><svg viewBox="0 0 64 64"><path class="l" d="M1 0V64M63 0V64M6 13H58"/><path class="f" d="M2 13L10 8V18ZM62 13L54 8V18Z"/><path d="M25 42V34a7 7 0 0 1 14 0V42" fill="none" stroke="#fbd88f" stroke-width="4"/><path class="fy" d="M19 40H45V60H19Z"/><path class="ld" d="M32 46V54"/></svg></button>
      <button aria-label="Convert Constraint"><svg viewBox="0 0 32 32"><path class="l" d="M1 0V32M31 0V32M5 7H27"/><path class="f" d="M2 7L8 3V11ZM30 7L24 3V11Z"/><path class="lb" d="M14 16Q6 20 12 28"/><path class="lr" d="M18 28Q26 24 20 16"/></svg></button>
      <button aria-label="Toggle Dynamic"><svg viewBox="0 0 32 32"><path class="l" d="M1 0V32M27 0V13M5 7H23"/><path class="f" d="M2 7L8 3V11ZM26 7L20 3V11Z"/><use class="c-gold" href="#bulb" x="20" y="15" width="12" height="17"/><path class="fc" d="M26 15a6 6 0 0 1 0 12Z"/></svg></button>
      <button aria-label="Show Dynamic"><svg viewBox="0 0 32 32"><path class="l" d="M1 0V32M27 0V13M5 7H23"/><path class="f" d="M2 7L8 3V11ZM26 7L20 3V11Z"/><use class="c-gold" href="#bulb" x="20" y="15" width="12" height="17"/></svg></button>
      <button aria-label="Hide Dynamic"><svg viewBox="0 0 32 32"><path class="l" d="M1 0V32M27 0V13M5 7H23"/><path class="f" d="M2 7L8 3V11ZM26 7L20 3V11Z"/><use class="c-cyan" href="#bulb" x="20" y="15" width="12" height="17"/></svg></button>
    </div>
  </section>

  <section class="bare">
    <h2><svg class="tri"><use href="#tri"/></svg>New Panel<svg class="gear"><use href="#gear"/></svg></h2>
  </section>

  <footer>
    <button aria-label="Add panel"><svg width="24" height="24" viewBox="0 0 24 24"><path class="l" d="M12 1V23M1 12H23"/></svg></button>
    <button aria-label="Panel list"><svg width="28" height="20" viewBox="0 0 28 20"><path class="l" d="M1 2H26M8 7H28M8 13H28M1 18H26"/></svg></button>
  </footer>
</aside>

<main class="canvas">
  <div class="view-label"><span class="plus">+</span><span>Custom View</span><span>2D Wireframe</span></div>

  <svg class="drawing" width="340" height="1480" viewBox="0 0 340 1480" aria-hidden="true">
    <g fill="none" stroke="#0a0ac8" stroke-width="2">
      <path d="M165 1361V489L340 443M176 1365V492M187 1349V508L340 466M165 497L340 451M176 503L340 458"/>
      <path d="M176 1343L340 1297M187 1348L340 1303M165 1361L340 1311M176 1365L340 1318M165 1361L176 1365M176 1343L187 1349"/>
    </g>
    <path d="M113 1289V1385L186 1363M113 1385L178 1408" fill="none" stroke="#d8d8d8" stroke-width="2"/>
    <g class="ucs"><text x="129" y="1281">Y</text><text x="207" y="1360">X</text><text x="200" y="1404">Z</text></g>
  </svg>

  <svg class="cube" width="178" height="300" viewBox="0 0 178 300" aria-hidden="true">
    <path d="M80 95C120 98 147 115 147 136C147 165 90 187 20 187V170C80 168 114 150 114 134C114 122 100 112 80 108Z" fill="#484d54"/>
    <path d="M0 15L17 12L84 28L28 42H0Z" fill="#a4a4a4"/>
    <path d="M0 48L28 42L84 28L80 119L28 138L0 150Z" fill="url(#face)"/>
    <path d="M28 41L84 28M84 28L82 60" fill="none" stroke="#333" stroke-dasharray="8 4"/>
    <text x="31" y="93" font-size="17" class="cube-face" transform="rotate(-10 31 93)">TOP</text>
    <text x="97" y="109" font-size="28" class="cube-dir" transform="rotate(60 97 100)">E</text>
    <text x="94" y="178" font-size="36" class="cube-dir" transform="rotate(30 106 166)">S</text>
  </svg>
  <button class="ucs-pill">Unnamed<svg width="18" height="13" viewBox="0 0 18 13"><path d="M1 1H17L9 12Z" fill="none" stroke="#2a2f36" stroke-width="2"/></svg></button>

  <section class="command" aria-label="Command line">
    <div class="history">
      <div class="lines"><p>Command: _qsave</p><p>Command: UCS</p><p>Current ucs name:&nbsp; *WORLD*</p><p>Specify origin of UCS or [Face/NAmed/OBject/Previous/View/World/X/Y/Z/ZAxis] &lt;World&gt;: x</p><p>Specify rotation angle about X axis &lt;90&gt;: 90</p></div>
      <span class="thumb"></span>
    </div>
    <div class="prompt">
      <button class="recent" aria-label="Recent commands"><svg width="42" height="26" viewBox="0 0 42 26"><path d="M1 3L9 8L1 13M13 23H27" fill="none" stroke="#a9adb4" stroke-width="2"/><path d="M31 9H42L36 17Z" fill="#a9adb4"/></svg></button>
      <p><b>OSNAP</b> OSNAP</p>
      <button class="help" aria-label="Help">?</button>
      <svg class="small-tri"><use href="#tri"/></svg>
      <button aria-label="Open history"><svg width="26" height="28" viewBox="0 0 26 28"><path class="l" d="M9 9H1V27H25V9H17"/><path class="l" d="M6 9V27"/><path class="lb" d="M13 5V18"/><path class="fb" d="M8 7L13 0L18 7Z"/></svg></button>
    </div>
  </section>
</main>

<aside class="inspector">
  <div class="ins-tabs">
    <button class="active" aria-label="Layers"><svg width="32" height="30" viewBox="0 0 32 30"><use href="#stack" width="26" height="24" x="0" y="0"/><circle cx="25" cy="21" r="8" fill="#d9d9d9" stroke="#3b4252" stroke-width="2"/><path d="M25 19V26M25 15V17" stroke="#3b4252" stroke-width="2"/></svg></button>
    <button aria-label="References"><svg width="32" height="28" viewBox="0 0 32 28"><path class="f" d="M0 18H13V5H22V14H31V28H0Z"/><path class="f" d="M24 5L31 13H24Z"/><path d="M0 0H13V18H0Z" fill="#31343f"/><use href="#clip" class="c-gray" width="12" height="19"/></svg></button>
    <button aria-label="Sheet Set"><svg width="28" height="26" viewBox="0 0 28 26"><path class="f" d="M0 0H28V26H0Z"/><path class="fm" d="M0 0H28V6H0Z"/><path class="fin" d="M2 2H5V4H2ZM4 8H9V13H4ZM12 8H17V13H12ZM19 8H24V13H19ZM4 15H9V20H4ZM12 15H17V20H12ZM19 15H24V20H19ZM4 22H24V24H4Z"/></svg></button>
    <span></span>
    <button class="fold" aria-label="Collapse"><svg width="14" height="12" viewBox="0 0 14 12"><path d="M1 1L6 6L1 11M8 1L13 6L8 11" fill="none" stroke="#a9adb4" stroke-width="2"/></svg></button>
  </div>

  <section class="layers">
    <h2>Layers<svg width="26" height="26"><use href="#dock"/></svg></h2>
    <div class="layer-tools">
      <button aria-label="Layer Isolate"><svg viewBox="0 0 32 32"><path class="fbl" d="M0 18L9 8H31L21 18Z"/><circle cx="16" cy="7" r="7" fill="#d9d9d9" stroke="#3b4252"/><path class="f" d="M3 21H21L31 12V15L22 25H0ZM3 28H21L31 19V22L22 32H0Z"/></svg></button>
      <button aria-label="Layer Walk"><svg viewBox="0 0 32 32"><use href="#stack" width="26" height="24"/><path class="fy" d="M14 20L18 18L28 30L22 32Z"/><path class="fw" d="M20 17L28 15L31 22L25 24Z"/></svg></button>
      <button aria-label="Previous"><svg viewBox="0 0 32 32"><use href="#stack" x="4" y="6" width="28" height="26"/><path class="fb k" d="M0 6L8 0V4C14 4 20 7 20 14C16 9 12 9 8 9V13Z"/></svg></button>
      <button aria-label="Merge Down"><svg viewBox="0 0 32 32"><use href="#stack" width="26" height="26"/><path class="fbl" d="M0 24L3 20H17L26 11V15L18 24Z"/><path class="lw" d="M28 18L18 29"/><path class="fw" d="M15 31V23L23 31Z"/></svg></button>
      <button aria-label="Move Up"><svg viewBox="0 0 32 32"><use href="#stack" width="26" height="26"/><path class="fbl" d="M0 24L3 20H17L26 11V15L18 24Z"/><path class="lw" d="M17 30L27 20"/><path class="fw" d="M30 17V25L22 17Z"/></svg></button>
      <button aria-label="Freeze"><svg viewBox="0 0 32 32"><use href="#sheet" class="c-gray" y="2" width="27" height="12"/><use href="#snow" class="c-cyan k-bg" x="13" y="11" width="19" height="20"/></svg></button>
      <button aria-label="Off"><svg viewBox="0 0 32 32"><use href="#sheet" class="c-gray" y="2" width="27" height="12"/><use href="#bulb" class="c-cyan" x="17" y="12" width="13" height="18"/></svg></button>
      <button aria-label="Lock"><svg viewBox="0 0 32 32"><use href="#sheet" class="c-gray" y="2" width="27" height="12"/><use href="#lock" class="c-cyan" x="15" y="10" width="16" height="21"/></svg></button>
      <button aria-label="Unlock"><svg viewBox="0 0 32 32"><use href="#sheet" class="c-gray" y="2" width="27" height="12"/><path d="M22 19V14a4 4 0 0 1 8 0V16" fill="none" stroke="#fbd88f" stroke-width="2"/><path class="fy" d="M12 18H26V30H12Z"/><path class="ld" d="M19 21V26"/></svg></button>
    </div>
    <div class="combo tall wide">
      <span class="dot"></span><svg class="dim" width="16" height="22"><use href="#lock"/></svg><svg class="dim" width="20" height="20"><use href="#snow"/></svg><span class="swatch" style="background:#fff"></span>
      <select aria-label="Current layer"><option>0</option></select><svg class="small-tri"><use href="#tri"/></svg>
    </div>
    <div class="combo tall"><select aria-label="Layer state"><option>Unsaved Layer State</option></select><svg class="small-tri"><use href="#tri"/></svg></div>
    <button class="disclose"><svg width="18" height="10"><use href="#chev"/></svg>Hide Layer List</button>

    <div class="layer-list">
      <div class="table-box">
      <table>
        <colgroup><col class="c1"><col class="c2"><col class="c3"><col class="c4"><col class="c5"><col></colgroup>
        <thead><tr>
          <th aria-label="Visible"><svg width="24" height="16" viewBox="0 0 24 16"><path class="f" fill-rule="evenodd" d="M0 8Q12-8 24 8Q12 24 0 8ZM12 3a5 5 0 1 0 0.100 0Z"/><circle class="f" cx="12" cy="8" r="3"/></svg></th>
          <th class="sorted"><span><svg width="18" height="18" viewBox="0 0 18 18"><path class="l" d="M1 1H17V17H1Z"/><path class="f" d="M1 1H17L1 17Z"/></svg>N…<svg width="12" height="20" viewBox="0 0 12 20"><path class="f" d="M1 7L6 1L11 7ZM1 13L6 19L11 13Z"/></svg></span></th>
          <th aria-label="Freeze"><svg class="c-gray" width="18" height="20"><use href="#snow"/></svg></th>
          <th aria-label="Lock"><svg class="c-gray" width="16" height="22"><use href="#lock"/></svg></th>
          <th aria-label="Lineweight"><svg width="18" height="16" viewBox="0 0 18 16"><path class="f" d="M0 1H18V3H0ZM0 6H18V8H0ZM0 12H18V16H0Z"/></svg></th>
          <th aria-label="Linetype"><svg width="20" height="16" viewBox="0 0 20 16"><path class="l" stroke-dasharray="2 2" d="M0 2H20"/><path class="l" stroke-dasharray="5 2" d="M0 8H20"/><path class="l" d="M0 14H20"/></svg></th>
        </tr></thead>
        <tbody>
          <tr class="selected"><td><span class="dot"></span></td><td><span class="name"><i class="swatch" style="background:#fff"></i>0</span></td><td></td><td></td><td>Default</td><td><hr></td></tr>
          <tr><td><span class="dot"></span></td><td><span class="name"><i class="swatch" style="background:#f0642c"></i>Armar…</span></td><td><svg class="c-gray" width="18" height="18"><use href="#snow"/></svg></td><td></td><td>Default</td><td><hr></td></tr>
          <tr><td><span class="dot"></span></td><td><span class="name"><i class="swatch" style="background:#9e6cb2"></i>Caixil…</span></td><td></td><td></td><td>Default</td><td><hr></td></tr>
          <tr><td><span class="dot"></span></td><td><span class="name"><i class="swatch" style="background:#fff"></i>Defpo…</span></td><td><svg class="c-gray" width="18" height="18"><use href="#snow"/></svg></td><td></td><td>Default</td><td><hr></td></tr>
          <tr><td><span class="dot"></span></td><td><span class="name"><i class="swatch" style="background:#f39b3a"></i>Lages</span></td><td><svg class="c-gray" width="18" height="18"><use href="#snow"/></svg></td><td></td><td>Default</td><td><hr></td></tr>
          <tr><td><span class="dot"></span></td><td><span class="name"><i class="swatch" style="background:#f39b3a"></i>Paredes</span></td><td><svg class="c-gray" width="18" height="18"><use href="#snow"/></svg></td><td></td><td>Default</td><td><hr></td></tr>
          <tr><td><span class="dot"></span></td><td><span class="name"><i class="swatch" style="background:#1a35fa"></i>Portas</span></td><td><svg class="c-gray" width="18" height="18"><use href="#snow"/></svg></td><td></td><td>Default</td><td><hr></td></tr>
          <tr><td><span class="dot"></span></td><td><span class="name"><i class="swatch" style="background:#a9fa4c"></i>Vidros</span></td><td><svg class="c-gray" width="18" height="18"><use href="#snow"/></svg></td><td></td><td>Default</td><td><hr></td></tr>
        </tbody>
      </table>
      </div>
      <span class="hthumb"></span>
    </div>

    <div class="list-actions">
      <button aria-label="New layer"><svg width="26" height="26" viewBox="0 0 26 26"><path class="l" d="M10 2H24L16 12H2Z"/><path class="lm" d="M3 18H16L25 8M3 24H16L25 14"/></svg></button>
      <button aria-label="Layer settings"><svg width="30" height="30" viewBox="0 0 30 30"><path class="l" d="M10 2H22L14 10H2Z"/><path class="lm" d="M2 16H14L22 7M2 22H10"/><path d="M12 15H29V29H12Z" fill="#3b4252" stroke="#fff" stroke-width="2"/><path class="lw" d="M15 20H17M19 20H26M15 25H17M19 25H26"/></svg></button>
      <button aria-label="New group"><svg width="28" height="22" viewBox="0 0 28 22"><path class="f" d="M0 0H10L13 4H21V6H7L1 20H0Z"/><path class="f" d="M8 8H27L20 21H2Z"/></svg></button>
      <button aria-label="New dynamic group"><svg width="28" height="22" viewBox="0 0 28 22"><path class="f" d="M0 0H10L13 4H21V6H7L1 20H0Z"/><path class="f" d="M8 8H27L20 21H2Z"/><path d="M18 9L11 15H15L13 20L21 14H16Z" fill="#3b4252"/></svg></button>
      <span class="spacer"></span>
      <button class="minus" aria-label="Delete layer"></button>
      <button aria-label="Columns"><svg width="38" height="18" viewBox="0 0 38 18"><path class="l" d="M1 1H19V17H1ZM7 1V17M13 1V17"/><path class="f" d="M26 6H37L32 13Z"/></svg></button>
    </div>

    <label class="search"><svg width="38" height="28" viewBox="0 0 38 28"><g fill="none" stroke="#222" stroke-width="2.400"><circle cx="12" cy="12" r="10"/><path d="M19 19L26 27M26 11L31 16L36 11"/></g></svg><input type="search" aria-label="Search for layer" placeholder="Search for layer"></label>
  </section>

  <section class="properties">
    <h2>Properties
      <span class="seg"><button class="on">All</button><button>My</button></span>
      <svg class="note" width="28" height="28" viewBox="0 0 28 28"><g stroke="#858b96" fill="none" stroke-width="2"><path d="M12 23H1V1H19V10M5 6H15M5 11H15M5 16H11"/></g><path fill="#858b96" d="M11 28L13 20L23 11L28 16L18 26Z"/></svg>
      <svg width="26" height="26"><use href="#dock"/></svg>
    </h2>
    <div class="combo tall off"><select aria-label="Selection" disabled><option>Model Space</option></select><svg class="small-tri"><use href="#tri"/></svg></div>

    <div class="props">
      <div class="prop-scroll">
        <h3><svg width="18" height="10"><use href="#chev"/></svg>General</h3>
        <div class="prop current"><label for="p1">Color</label><div class="combo"><span class="swatch" style="background:#fff"></span><select id="p1"><option>ByLayer</option></select><svg class="small-tri"><use href="#tri"/></svg></div></div>
        <div class="prop"><label for="p2">Layer</label><div class="combo"><select id="p2"><option>0</option></select><svg class="small-tri"><use href="#tri"/></svg></div></div>
        <div class="prop"><label for="p3">Linetype</label><div class="combo"><i class="ltype"></i><select id="p3"><option>ByL…</option></select><svg class="small-tri"><use href="#tri"/></svg></div></div>
        <div class="prop"><label for="p4">Linetype scale</label><input class="field" id="p4" value="1.000"></div>
        <div class="prop"><label for="p5">Lineweight</label><div class="combo"><select id="p5"><option>ByLayer</option></select><svg class="small-tri"><use href="#tri"/></svg></div></div>
        <div class="prop"><label for="p6">Transparency</label><div class="pair"><input class="field num" id="p6" value="0"><div class="combo mini"><svg class="c-gray" width="26" height="26"><use href="#checker"/></svg><svg class="small-tri"><use href="#tri"/></svg></div></div></div>
        <h3><svg width="18" height="10"><use href="#chev"/></svg>Annotation</h3>
        <div class="prop"><label for="p7">Text style</label><div class="combo"><select id="p7"><option>rd</option></select><svg class="small-tri"><use href="#tri"/></svg></div></div>
        <div class="prop"><label for="p8">Dimension style</label><div class="combo"><select id="p8"><option>rd</option></select><svg class="small-tri"><use href="#tri"/></svg></div></div>
        <div class="prop"><label for="p9">Detail View style</label><div class="combo"><select id="p9"><option>Imperial24</option></select><svg class="small-tri"><use href="#tri"/></svg></div></div>
        <div class="prop"><label for="p10">Multileader style</label><div class="combo"><select id="p10"><option>Standard</option></select><svg class="small-tri"><use href="#tri"/></svg></div></div>
        <div class="prop"><label for="p11">Section View style</label><div class="combo"><select id="p11"><option>Imperial24</option></select><svg class="small-tri"><use href="#tri"/></svg></div></div>
        <div class="prop"><label for="p12">Table style</label><div class="combo"><select id="p12"><option>Standard</option></select><svg class="small-tri"><use href="#tri"/></svg></div></div>
        <div class="prop"><label for="p13">Annotation scale</label><div class="combo"><select id="p13"><option>1:1</option></select><svg class="small-tri"><use href="#tri"/></svg></div></div>
        <div class="prop"><label for="p14">Text height</label><div class="pair"><input class="field" id="p14" value="0.005"><button class="pick" aria-label="Pick height"><svg width="30" height="20" viewBox="0 0 30 20"><path class="l" d="M1 0V20M29 0V12"/><path class="lb" d="M6 6H24"/><path class="fb" d="M4 6L9 2V10ZM26 6L21 2V10Z"/></svg></button></div></div>
      </div>
      <span class="vthumb"></span>
    </div>
  </section>
</aside>

<footer class="statusbar">
  <button class="layout on">Model</button>
  <button class="layout add" aria-label="New layout"><svg width="22" height="22" viewBox="0 0 22 22"><path class="l" d="M11 0V22M0 11H22"/></svg></button>
  <button class="layout">A3</button>
  <button class="layout">Layout2</button>
  <span class="spacer"></span>
  <output class="coords">4.216,&nbsp; -2.021, 0.000</output>
  <div class="toggles">
    <button aria-label="Grid"><svg viewBox="0 0 32 32"><path class="l" d="M7 1V31M16 1V31M25 1V31M1 7H31M1 16H31M1 25H31"/></svg></button>
    <button aria-label="Snap"><svg viewBox="0 0 32 32"><path class="f" d="M4 4h4v4h-4zM14 4h4v4h-4zM24 4h4v4h-4zM4 14h4v4h-4zM14 14h4v4h-4zM24 14h4v4h-4zM4 24h4v4h-4zM14 24h4v4h-4zM24 24h4v4h-4z"/></svg></button>
    <button aria-label="Ortho"><svg viewBox="0 0 32 32"><path class="l" d="M1 0V31H32M1 21H10V31"/></svg></button>
    <button aria-label="Polar"><svg viewBox="0 0 32 32"><path class="l" d="M21 6A12 12 0 1 0 25 17M13 17H32M13 17L28 3"/></svg></button>
    <button aria-label="Lineweight"><svg viewBox="0 0 32 32"><path class="f" d="M0 2H32V4H0ZM0 2H15V6H0ZM0 11H32V13H0ZM0 11H15V16H0ZM0 20H32V22H0ZM0 20H15V28H0Z"/></svg></button>
    <button aria-label="Transparency"><svg viewBox="0 0 32 32"><use href="#checker" class="c-gray" x="2" y="2" width="28" height="28"/></svg></button>
    <button aria-label="Selection Cycling"><svg viewBox="0 0 32 32"><path class="lw" d="M6 1H1V27H6M16 1H22V12"/><path d="M7 5H15V12H7Z" fill="none" stroke="#7ed992" stroke-width="2"/><circle cx="11" cy="20" r="4" fill="none" stroke="#7ed992" stroke-width="2"/><path class="fw k" d="M18 12L31 26L25 26L28 32H24L21 27L18 29Z"/></svg></button>
    <button aria-label="Object Snap Tracking"><svg viewBox="0 0 32 32"><path class="l" d="M32 27H1L24 2"/><path class="f" d="M10 13H16V19H10Z"/></svg></button>
    <button class="on" aria-label="Object Snap"><svg viewBox="0 0 32 32"><path class="lw" d="M1 1H9V9H1ZM14 5H31V31H5V13"/></svg></button>
    <button class="on" aria-label="Annotation Visibility"><svg viewBox="0 0 32 32"><use href="#ann" width="28" height="32"/><circle class="fw" cx="26" cy="7" r="6"/></svg></button>
    <button aria-label="Auto Scale"><svg viewBox="0 0 32 32"><use href="#ann" class="c-gray" width="28" height="32"/><use href="#bolt" x="20" y="1" width="12" height="15"/></svg></button>
    <button aria-label="Annotation Scale"><svg viewBox="0 0 32 32"><use href="#ann" class="c-gray" x="2" width="28" height="32"/></svg></button>
    <button class="scale">1:1<svg class="small-tri"><use href="#tri"/></svg></button>
    <button aria-label="Workspace"><svg viewBox="0 0 32 32"><path class="l" d="M1 1H13V13H1ZM13 20L19 30H7Z"/><circle class="l" cx="25" cy="12" r="6"/></svg></button>
    <button aria-label="Settings"><svg class="c-gray" viewBox="0 0 32 32"><use href="#gear" x="0" y="0" width="32" height="32"/></svg></button>
  </div>
</footer>
</div>

<section class="dialog" role="dialog" aria-labelledby="dlg-title">
  <header>
    <span class="lights"><button class="close" aria-label="Close"></button><button aria-label="Minimize"></button><button aria-label="Zoom"></button></span>
    <h1 id="dlg-title">Drafting Settings</h1>
  </header>
  <div class="dlg-tabs" role="tablist">
    <button role="tab">Snap &amp; Grid</button><button role="tab">Polar Tracking</button><button role="tab" class="on" aria-selected="true">Object Snap</button><button role="tab">3D Object Snap</button><button role="tab">Dynamic Input</button>
  </div>
  <div class="pane">
    <div class="switches">
      <label class="check"><input type="checkbox" checked>Object Snap On</label>
      <label class="check"><input type="checkbox">Object Snap Tracking On</label>
    </div>
    <h2>Object Snap modes</h2>
    <div class="modes">
      <div class="mode-grid">
        <div class="mode"><svg viewBox="0 -12 48 60"><path d="M2 2H47V47H2Z"/></svg><label class="check"><input type="checkbox">Endpoint</label></div>
        <div class="mode"><svg viewBox="0 -12 48 60"><path d="M2 29L16 3L30 29Z"/></svg><label class="check"><input type="checkbox" checked>Midpoint</label></div>
        <div class="mode"><svg viewBox="0 -12 48 60"><circle cx="24" cy="24" r="23"/></svg><label class="check"><input type="checkbox">Center</label></div>
        <div class="mode"><svg viewBox="0 -12 48 60"><circle cx="24" cy="24" r="23"/></svg><label class="check"><input type="checkbox">Geometric Center</label></div>
        <div class="mode"><svg viewBox="0 -12 48 60"><circle cx="24" cy="24" r="23"/><path d="M0 0L48 48M48 0L0 48"/></svg><label class="check"><input type="checkbox">Node</label></div>
        <div class="mode"><svg viewBox="0 -12 48 60"><path d="M16 0L32 16L16 32L0 16Z"/></svg><label class="check"><input type="checkbox">Quadrant</label></div>
        <div class="mode"><svg viewBox="0 -12 48 60"><path d="M0 0L48 48M48 0L0 48"/></svg><label class="check"><input type="checkbox">Intersection</label></div>
        <div class="mode"><svg viewBox="0 -12 48 60"><path class="bar" d="M1 16H20M22 16H26"/></svg><label class="check"><input type="checkbox">Extension</label></div>
        <div class="mode"><svg viewBox="0 -12 48 60"><path d="M2 1H18V13H30V30H14V18H2Z"/></svg><label class="check"><input type="checkbox">Insertion</label></div>
        <div class="mode"><svg viewBox="0 -12 48 60"><path d="M2 0V30H33M2 14H18V30"/></svg><label class="check"><input type="checkbox">Perpendicular</label></div>
        <div class="mode"><svg viewBox="0 -12 48 60"><circle cx="25" cy="25" r="22"/><path d="M1 1H33"/></svg><label class="check"><input type="checkbox">Tangent</label></div>
        <div class="mode"><svg viewBox="0 -12 48 60"><path d="M2 1H30L2 30H30Z"/></svg><label class="check"><input type="checkbox">Nearest</label></div>
        <div class="mode"><svg viewBox="0 -12 48 60"><path d="M2 2H47V47H2ZM0 48L48 0M1 1L48 48"/></svg><label class="check"><input type="checkbox">Apparent intersection</label></div>
        <div class="mode"><svg viewBox="0 -12 48 60"><path d="M1 23L24 0M9 32L32 9"/></svg><label class="check"><input type="checkbox">Parallel</label></div>
      </div>
      <div class="mode-actions"><button class="btn">Select All</button><button class="btn">Clear All</button></div>
    </div>
    <div class="tip">
      <svg width="36" height="60" viewBox="0 0 36 60" aria-hidden="true"><path d="M18 1C29 1 35 9 35 19C35 28 29 32 26 42H10C7 32 1 28 1 19C1 9 7 1 18 1Z" fill="url(#glow)" stroke="#b9a332"/><path d="M14 8H22V28H14ZM14 31H22V38H14Z" fill="#44617c"/><path d="M10 41H26V57H10Z" fill="#8f9bc0"/><path d="M10 46H26M10 51H26" stroke="#e6e9f4" stroke-width="2"/><path d="M13 56H23V59H13Z" fill="#222"/></svg>
      <p>To track from an OSnap point, pause over a point while in a command.A tracking vector<br>appears when you move the cursor.To stop tracking, pause over the point again.</p>
    </div>
  </div>
  <footer><button class="btn help-btn">Help</button><button class="btn pref-btn">Preferences...</button><span class="spacer"></span><button class="btn act">Cancel</button><button class="btn act primary">OK</button></footer>
</section>

</body>
</html>
```
FILE: styles.css
```css
:root {
  --bar: #3b4353;
  --panel: #3e4350;
  --inspector: #3b4252;
  --edge: #222831;
  --tab-off: #31343f;
  --field: #4f596c;
  --ink: #d9d9d9;
  --ui: Inter, "Noto Sans", sans-serif;
  --tool: "Liberation Sans", Arial, sans-serif;
  --doc: "Noto Sans", "Open Sans", sans-serif;
}

* { box-sizing: border-box; }

body {
  margin: 0;
  height: 100vh;
  display: flex;
  flex-direction: column;
  overflow: hidden;
  background: var(--edge);
  color: var(--ink);
  font: 22px/28px var(--ui);
}

h1, h2, h3, p { margin: 0; font-weight: inherit; font-size: inherit; }
button { border: 0; padding: 0; background: none; color: inherit; font: inherit; display: flex; align-items: center; justify-content: center; flex: none; }
select, input { font: inherit; color: inherit; border: 0; padding: 0; background: none; min-width: 0; outline: 0; }
select { appearance: none; opacity: 1; }
svg { display: block; flex: none; overflow: visible; }
.sprite { position: absolute; width: 0; height: 0; }
.spacer { flex: 1; }

/* Icon paint: f* fills, l* strokes */
.f { fill: #d9d9d9; }
.fw { fill: #fff; }
.fm { fill: #b4b4b4; }
.fb { fill: #85c1fc; }
.fbl { fill: #99c9f8; }
.fy { fill: #fbd88f; }
.fr { fill: #ef7068; }
.ft { fill: #d1ac7d; }
.fg { fill: #7ed992; }
.fc { fill: #8ad8e2; }
.fd { fill: #3e4350; }
.fin { fill: #4a4d59; }
.l, .lw, .lb, .lm, .ld, .lr, .lg, .ltan { fill: none; stroke-width: 2; }
.l { stroke: #d9d9d9; }
.lw { stroke: #fff; }
.lb { stroke: #85c1fc; }
.lm { stroke: #a0a4ac; }
.ld { stroke: #5d616b; }
.lr { stroke: #d77370; }
.lg { stroke: #7ed992; stroke-width: 4; }
.ltan { stroke: #d1ac7d; }
.fs { fill: #6d717c; }
.thin { stroke-width: 1; }
.thick { stroke-width: 3; }
.thicker { stroke-width: 4; }
.k { stroke: #3e4350; stroke-width: 2; paint-order: stroke; }
.c-blue { color: #85c1fc; }
.c-green { color: #7ed992; }
.c-gold { color: #fbd88f; }
.c-cyan { color: #8ad8e2; }
.c-gray { color: #d9d9d9; }
.glyph { font-family: var(--tool); fill: #d9d9d9; text-anchor: middle; }
.glyph.heavy { stroke: #d9d9d9; stroke-width: 2; }
.glyph.b { font-weight: 700; }
.glyph.w { fill: #fff; }
.glyph.bl { fill: #85c1fc; font-weight: 700; }
.small-tri { width: 12px; height: 8px; color: var(--ink); pointer-events: none; }

/* Top bars */
.menubar { flex: none; height: 74px; background: #000; display: flex; align-items: center; justify-content: flex-end; padding: 0 26px 10px 0; }
.mic-dot { width: 12px; height: 12px; border-radius: 50%; background: #c37b28; }

.toolbar { flex: none; height: 82px; padding: 14px 0 0 388px; background: var(--bar); border-bottom: 2px solid #2c323d; display: flex; align-items: center; gap: 96px; }
.toolbar .group { display: flex; gap: 34px; }
.toolbar svg { width: 32px; height: 32px; }

.doctabs { flex: none; height: 46px; border-bottom: 2px solid var(--edge); padding-left: 2px; display: flex; gap: 2px; font: 22px/28px var(--doc); }
.doctabs > * { background: var(--bar); }
.doc-icon { width: 46px; }
.doc-add { width: 44px; }
.doc { width: 257px; padding: 6px 7px; color: #a3a7ae; text-decoration: none; }
.doc.active { background: #4d586c; color: #fff; font-weight: 600; }
.doc-rest { flex: 1; margin-right: 2px; }

/* Main area */
.workspace { flex: 1; min-height: 0; display: grid; grid-template-columns: 368px 1fr 546px; grid-template-rows: minmax(0, 1fr) 48px; }

.toolset { grid-row: span 2; background: var(--panel); display: flex; flex-direction: column; font: 20px/24px var(--tool); color: #f2f2f2; }
.toolset-tabs { display: flex; gap: 2px; background: var(--edge); height: 46px; margin-bottom: -2px; flex: none; font-size: 24px; }
.toolset-tabs button { flex: 1; background: var(--tab-off); color: #a2a3a8; margin-bottom: 2px; padding-bottom: 1px; }
.toolset-tabs .active { background: var(--panel); color: #fff; margin-bottom: 0; }
.toolset-tabs .fold { flex: 0 0 46px; background: var(--panel); }
.toolset section { padding-bottom: 12px; position: relative; border-bottom: 2px solid var(--edge); margin: 0 8px; }
.toolset section.bare { padding-bottom: 0; }
.toolset h2 { height: 42px; display: flex; align-items: center; gap: 10px; padding: 3px 3px 0 1px; }
.toolset .tri { width: 16px; height: 8px; }
.toolset .gear { width: 18px; height: 18px; margin-left: auto; }
.tools { display: grid; grid-template-columns: repeat(8, 44px); grid-template-rows: 44px 44px; grid-auto-flow: column; }
.tools.single { grid-template-rows: 44px; padding-top: 4px; }
.tools button { position: relative; width: 44px; height: 44px; }
.tools svg { width: 32px; height: 32px; }
.tools .big { grid-row: span 2; grid-column: span 2; width: 88px; height: 88px; }
.tools .big svg { width: 64px; height: 64px; }
.fly::after { content: ""; position: absolute; right: 0; bottom: 0; width: 8px; height: 8px; background: linear-gradient(135deg, transparent 50%, #9a9ca1 50%); }
.big.fly::after { right: 2px; bottom: 2px; }
.toolset footer { margin-top: auto; display: flex; align-items: center; gap: 34px; padding: 2px 30px 0; height: 48px; }

.canvas { position: relative; overflow: hidden; background: #21272f; }
.view-label { display: flex; align-items: center; gap: 15px; padding: 8px 0 0 24px; font: 600 23px/28px var(--doc); color: #a0a1a3; }
.view-label span + span { border-left: 2px solid #a0a1a3; padding-left: 11px; }
.view-label .plus { width: 26px; text-align: center; font-weight: 400; }
.drawing { position: absolute; left: 0; top: 0; }
.ucs { font: 300 34px Lato, sans-serif; fill: #f4f4f4; text-anchor: middle; }
.cube { position: absolute; right: 0; top: 88px; }
.cube-face { font-family: "Liberation Sans", sans-serif; font-weight: 700; fill: #45484c; }
.cube-dir { font-family: var(--ui); font-weight: 600; fill: #a8a8a8; }
.ucs-pill { position: absolute; right: 93px; top: 340px; height: 24px; padding: 0 11px; gap: 14px; border-radius: 8px; background: #687078; color: #2a2f36; font-size: 22px; }

/* Floating command line */
.command { position: absolute; bottom: 0; left: 0; right: 0; margin: 0 auto; width: 1000px; font: 20px/30px var(--doc); }
.history { margin-left: 80px; background: var(--bar); padding: 17px 11px 0 10px; height: 156px; display: flex; justify-content: space-between; align-items: flex-end; }
.lines { height: 139px; overflow: hidden; display: flex; flex-direction: column; justify-content: flex-end; color: #b0b3b9; white-space: nowrap; }
.history .thumb { width: 8px; height: 40px; border-radius: 4px; background: #9a9da3; margin-bottom: 4px; }
.prompt { height: 50px; background: var(--bar); display: flex; align-items: center; padding: 0 20px 0 18px; font-size: 21px; color: #fff; font-weight: 500; }
.prompt p { margin: 0 auto 0 30px; padding-bottom: 1px; }
.prompt .help { width: 26px; height: 26px; border-radius: 50%; background: #fff; color: #2b3140; font: 700 20px/26px var(--ui); }
.prompt .small-tri { margin: 0 24px 0 18px; color: #9a9da3; }

/* Right-hand palettes */
.inspector { background: var(--inspector); display: flex; flex-direction: column; min-height: 0; font-weight: 500; }
.ins-tabs { display: flex; gap: 2px; height: 46px; flex: none; background: var(--edge); }
.ins-tabs > * { background: var(--tab-off); width: 103px; margin-bottom: 2px; }
.ins-tabs span { flex: 1; }
.ins-tabs .active { background: var(--inspector); margin-bottom: 0; }
.ins-tabs .fold { width: 48px; background: var(--inspector); margin-top: 2px; }

.layers { padding: 0 20px; border-bottom: 2px solid var(--edge); height: 810px; flex: none; }
.layers h2 { display: flex; justify-content: space-between; align-items: center; height: 30px; padding-right: 6px; font-size: 23px; color: #e6e6e6; }
.layer-tools { display: flex; gap: 16px; justify-content: center; padding: 35px 0 21px; }
.layer-tools svg { width: 32px; height: 32px; }
.combo { display: flex; align-items: center; height: 38px; border: 2px solid #303d42; border-radius: 6px; background: var(--field); color: #fff; padding: 0 7px 0 12px; }
.combo select { flex: 1; }
.combo.tall { height: 52px; margin: 0 -3px 0 1px; padding-left: 11px; padding-right: 8px; }
.combo.tall.wide { height: 54px; margin: 0 -5px 2px -1px; padding: 0 8px 0 19px; gap: 16px; }
.combo.wide select { margin-left: 6px; }
.dot { display: inline-block; width: 16px; height: 16px; border-radius: 50%; background: #d9d9d9; vertical-align: middle; flex: none; }
.dim { color: #6f7684; }
.swatch { display: inline-block; width: 18px; height: 18px; border: 2px solid #000; flex: none; }
.disclose { height: 55px; padding: 0 0 2px 8px; gap: 22px; color: #cfd1d4; font-weight: 400; }

.layer-list { border: 2px solid #343b49; height: 418px; margin: 0 0 0 2px; }
.table-box { background: var(--field); height: 384px; border: solid var(--edge); border-width: 1px 0 2px 1px; overflow: hidden; }
table { width: 100%; table-layout: fixed; border-collapse: collapse; color: #fff; }
.c1 { width: 61px; } .c2 { width: 115px; } .c3 { width: 45px; } .c4 { width: 45px; } .c5 { width: 162px; }
th { height: 46px; padding: 0; background: var(--tab-off); border-right: 2px solid #2a2f3a; border-bottom: 2px solid #2a2f3a; }
th svg { margin: auto; }
th:last-child { border-right: 0; padding-left: 14px; }
th.sorted { background: var(--field); position: relative; }
th.sorted span { display: flex; align-items: center; padding: 0 12px 0 6px; gap: 10px; color: var(--ink); font-weight: 600; }
th.sorted::after { content: ""; position: absolute; left: 50px; bottom: 0; width: 14px; height: 10px; background: #4f94ee; clip-path: polygon(50% 0, 100% 100%, 0 100%); }
td { height: 38px; padding: 0 0 1px; white-space: nowrap; line-height: 26px; }
td:first-child { padding-left: 27px; }
td:nth-child(5) { padding-left: 13px; }
td:nth-child(6) { padding-left: 14px; }
td:nth-child(3) svg { margin: auto; }
td hr { border: 0; height: 2px; background: #fff; margin: 0; }
.name { display: flex; align-items: center; gap: 18px; }
.selected { background: #919eaf; }
.hthumb { display: block; width: 428px; max-width: 100%; height: 10px; border-radius: 5px; background: #8b909b; margin: 12px 0 0 2px; }

.list-actions { display: flex; align-items: center; height: 48px; padding: 2px 10px 0 17px; gap: 32px; }
.minus { width: 16px; height: 4px; background: #7d828d; }
.search { display: flex; align-items: center; gap: 8px; height: 40px; margin: 3px 2px 0; padding: 0 9px; border-radius: 10px; background: #fff; }
.search svg { height: 28px; }
.search input { flex: 1; font: 25px/32px var(--ui); color: #222; }
.search input::placeholder { color: #bdbdbf; opacity: 1; }

.properties { flex: 1; min-height: 0; display: flex; flex-direction: column; padding: 0 20px 16px; }
.properties h2 { display: flex; align-items: center; height: 32px; font-size: 23px; color: #e6e6e6; padding-right: 3px; flex: none; }
.seg { display: flex; margin-left: auto; border: 2px solid #2a2f3a; border-radius: 3px; background: #2a2f3a; gap: 2px; font: 500 18px/24px var(--ui); }
.seg button { width: 54px; background: #3e4454; color: #7d828d; }
.seg .on { width: 60px; background: var(--field); color: #fff; }
.properties .note { margin: 0 16px 0 20px; }
.combo.off { height: 42px; margin: 15px 2px 9px; background: #434b5c; border-color: #3a4352; color: #858b97; flex: none; }
.combo.off .small-tri { color: #7d828d; }
.props { flex: 1; min-height: 0; overflow: hidden; display: flex; justify-content: space-between; }
.prop-scroll { flex: 0 0 488px; }
.props h3 { display: flex; align-items: center; gap: 20px; height: 62px; padding-left: 8px; font-weight: 700; color: #cfd1d4; }
.props h3 svg { color: #232933; width: 18px; }
.prop { display: grid; grid-template-columns: 1fr 204px; align-items: center; gap: 19px; height: 46px; padding-right: 7px; color: #cfd1d4; }
.prop label { text-align: right; }
.prop.current { outline: 1px solid #464b58; outline-offset: -1px; }
.prop .combo .swatch { margin: 0 20px 0 6px; }
.ltype { width: 65px; height: 2px; background: #fff; margin-right: 27px; }
.field { width: 100%; height: 38px; border: 2px solid #303d42; border-radius: 3px; background: var(--field); color: #fff; padding: 2px 0 0 6px; font-weight: 500; }
.pair { display: flex; align-items: center; gap: 8px; padding-left: 5px; }
.pair .field { flex: 1; height: 34px; border-radius: 0; }
.field.num { text-align: right; padding-right: 6px; border-left-color: #5b9bf0; background: linear-gradient(#8f939b, #8f939b) 50% 100% / 1px 12px no-repeat var(--field); }
.combo.mini { width: 77px; justify-content: space-between; padding: 0 8px 0 14px; }
.pick { width: 40px; height: 38px; border: 2px solid #303d42; }
.vthumb { width: 10px; height: 240px; margin: 5px -2px 0 0; border-radius: 5px; background: #8b909b; flex: none; }

/* Status bar */
.statusbar { grid-column: 2 / 4; display: flex; background: var(--bar); border: solid var(--edge); border-width: 2px 2px 2px 0; font: 22px/28px var(--doc); color: #a9adb4; }
.layout { border-right: 2px solid var(--edge); width: 119px; padding-bottom: 3px; }
.layout.on { background: #4d586c; color: #fff; font-weight: 600; }
.layout.add { width: 46px; padding: 0; }
.coords { font: 23px/28px var(--ui); border-left: 2px solid var(--edge); padding: 7px 0 0 26px; color: #b0b3b9; width: 252px; white-space: nowrap; }
.toggles { display: flex; align-items: center; gap: 4px; padding-right: 8px; }
.toggles button { width: 40px; height: 40px; }
.toggles button > svg:not(.small-tri) { width: 32px; height: 32px; }
.toggles .on { background: #6a90c2; color: #fff; }
.toggles .scale { width: 52px; gap: 10px; padding-right: 6px; font-family: var(--ui); }

/* Drafting Settings window */
.dialog { position: absolute; top: 308px; left: 0; right: 0; margin: 0 auto; width: 1632px; border-radius: 20px; background: #ebebeb; color: #262626; font: 25px/32px var(--ui); box-shadow: 0 0 2px rgba(0, 0, 0, .7), 0 36px 90px rgba(0, 0, 0, .55); }
.dialog header { height: 57px; display: flex; align-items: center; background: #f9f8f6; border-bottom: 2px solid #d9d8d6; border-radius: 20px 20px 0 0; padding: 0 16px; }
.lights { display: flex; gap: 16px; width: 104px; }
.lights button { width: 24px; height: 24px; border-radius: 50%; background: #dedddb; border: 1px solid #cac9c7; }
.lights .close { background: #ec6a5e; border-color: #d9594e; }
.dialog h1 { flex: 1; text-align: center; font-size: 27px; font-weight: 600; color: #4a4947; margin-right: 104px; padding-bottom: 1px; }
.dlg-tabs { position: relative; display: grid; grid-template-columns: 184fr 220fr 196fr 236fr 216fr; width: 1052px; height: 42px; margin: 27px 0 -24px 288px; border-radius: 10px; background: #fff; box-shadow: 0 1px 2px rgba(0, 0, 0, .35); }
.dlg-tabs button { border-left: 2px solid #e2e2e2; }
.dlg-tabs button:first-child, .dlg-tabs .on, .dlg-tabs .on + button { border-left-color: transparent; }
.dlg-tabs .on { background: linear-gradient(#2f93fe, #0a7aff) border-box; color: #fff; }
.pane { margin: 0 41px; border: 1px solid #d9d9d9; border-radius: 10px; background: #e5e5e5; padding: 62px 43px 133px 44px; }
.switches { display: grid; grid-template-columns: 732px 1fr; padding-left: 4px; height: 28px; align-items: center; }
.check { display: flex; align-items: center; gap: 8px; }
.check input { appearance: none; position: relative; flex: none; width: 28px; height: 28px; margin: 0; border-radius: 7px; background: #fff; box-shadow: inset 0 0 0 1px #d0d0d0, inset 0 2px 2px #e6e6e6; }
.check input:checked { background: linear-gradient(#2f93fe, #0a7aff); box-shadow: none; }
.check input:checked::after { content: ""; position: absolute; left: 10px; top: 4px; width: 9px; height: 16px; border: solid #fff; border-width: 0 3px 3px 0; border-radius: 2px; transform: rotate(40deg); }
.pane h2 { margin-top: 47px; padding-left: 14px; font-size: 22px; line-height: 26px; color: #111; }
.modes { display: flex; justify-content: space-between; border: 1px solid #d3d3d3; border-radius: 8px; background: #dedede; padding: 26px 32px 35px 41px; }
.mode-grid { display: grid; grid-template-rows: repeat(7, 104px); grid-auto-flow: column; grid-auto-columns: 606px; }
.mode { display: flex; align-items: center; gap: 24px; }
.mode svg { width: 48px; height: 60px; fill: none; stroke: #000; stroke-width: 2; }
.mode .bar { stroke-width: 4; }
.mode-actions { display: flex; flex-direction: column; gap: 28px; align-self: flex-end; margin-bottom: 9px; }
.mode-actions .btn { width: 168px; }
.btn { height: 40px; border-radius: 10px; background: #fff; color: #111; box-shadow: 0 1px 2px rgba(0, 0, 0, .35), 0 0 1px rgba(0, 0, 0, .3); }
.tip { display: flex; gap: 30px; padding: 36px 0 0 243px; font-size: 22px; line-height: 26px; color: #111; }
.tip p { margin-top: 15px; white-space: nowrap; }
.tip svg { height: 60px; margin-bottom: -8px; }
.dialog footer { display: flex; gap: 31px; padding: 32px 42px 38px; }
.help-btn { width: 112px; }
.pref-btn { width: 222px; }
.act { width: 135px; }
.primary { background: linear-gradient(#2f93fe, #0a7aff); color: #fff; }
```
